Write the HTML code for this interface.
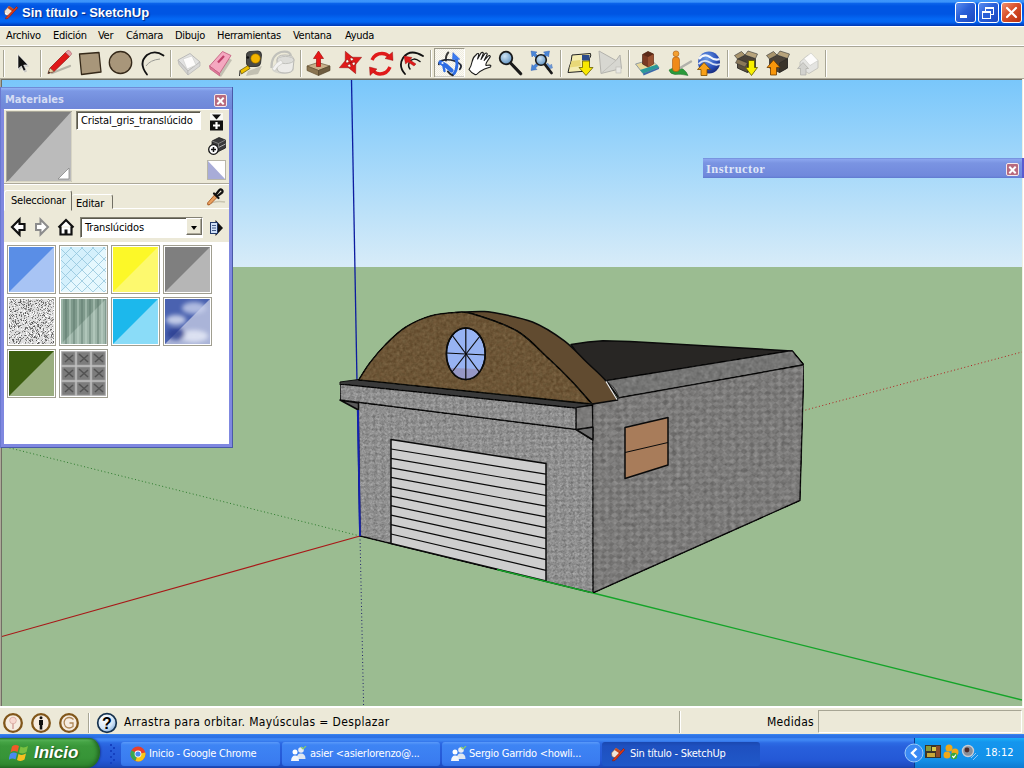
<!DOCTYPE html>
<html lang="es">
<head>
<meta charset="utf-8">
<title>Sin título - SketchUp</title>
<style>
*{box-sizing:border-box;margin:0;padding:0}
html,body{width:1024px;height:768px;overflow:hidden;background:#ece9d8}
body{position:relative;font-family:"DejaVu Sans Condensed","DejaVu Sans","Liberation Sans",sans-serif;font-size:11px;color:#000}
.abs{position:absolute}
/* title bar */
#title{left:0;top:0;width:1024px;height:26px;background:linear-gradient(#3d95fb 0,#3a92fa 2px,#0b63ea 3.5px,#0055e3 6px,#0055e3 14px,#0468f4 19px,#0365f2 22px,#0048cc 24.5px,#0038b0 26px)}
#title .cap{left:22px;top:5px;font-family:"Liberation Sans",sans-serif;font-weight:bold;font-size:13px;color:#fff;letter-spacing:0;text-shadow:1px 1px 1px #0a2a80;white-space:nowrap}
.tb{top:2px;width:21px;height:21px;border:1px solid #fff;border-radius:3px;background:linear-gradient(135deg,#5a8df0 0,#2a5fd8 45%,#1c48c0 100%)}
#tbx{background:linear-gradient(135deg,#f09070 0,#d8502a 45%,#b83010 100%)}
/* menu */
#menu{left:0;top:26px;width:1024px;height:19px;background:#ece9d8;border-top:1px solid #fff}
#menu span{position:absolute;top:2px;white-space:nowrap;letter-spacing:-.3px}
#tool{left:0;top:45px;width:1024px;height:35px;background:#ece9d8;border-top:1px solid #fff;box-shadow:inset 0 1px 0 #a8a596}
/* viewport */
#vp{left:0;top:80px;width:1022px;height:626px;overflow:hidden}
/* status */
#status{left:0;top:706px;width:1024px;height:28px;background:#ece9d8;border-top:2px solid #fff}
/* taskbar */
#frameb{left:0;top:734px;width:1024px;height:4px;background:linear-gradient(#3c8af4 0,#2e74e6 1.5px,#2c70e4 4px)}
#task{left:0;top:738px;width:1024px;height:30px;background:linear-gradient(#3a80f0 0,#4088f4 2px,#2c6ae4 5px,#2860dc 9px,#2458d6 22px,#1e4cc0 28px,#1a42a8 30px)}
#start{left:0;top:0;width:100px;height:30px;border-radius:0 11px 13px 0/0 14px 16px 0;background:linear-gradient(#2e7a2e 0,#58b458 2px,#45a445 4px,#3a983a 8px,#379437 20px,#2f862f 27px,#256e25 30px);box-shadow:inset -3px 0 4px -1px #1e5e1e,1px 0 2px #1a3a9a;color:#fff;font:italic bold 17px "Liberation Sans",sans-serif;text-shadow:1px 1px 2px #1a4a1a}
#tray{left:914px;top:0;width:110px;height:30px;background:linear-gradient(#1ab0f8 0,#1496ee 4px,#1290e8 22px,#0e7ad0 30px);border-left:1px solid #0a3a90;color:#fff}
.tbtn{top:4px;height:24px;border-radius:3px;background:linear-gradient(#5a9afa 0,#3e84f4 3px,#3a7cf0 20px,#3272e6 24px);color:#fff;white-space:nowrap;overflow:hidden}
.tbtn.act{background:linear-gradient(#1a48b0 0,#1e50c0 4px,#2058c8 24px)}
.tbtn span{position:absolute;left:30px;top:5px;letter-spacing:-.25px}
#mat{z-index:3;left:0;top:87px;width:233px;height:361px;background:#7f88e0;border-left:1px solid #6a78d0;box-shadow:inset -1px -1px 0 #4a5aa8}
.ptitle{left:0;top:0;width:231px;height:22px;background:linear-gradient(#5f78c8 0,#8fb0f4 1.5px,#7c98e4 4px,#738edc 13px,#6f86d8 22px);color:#d4dcf4;font:bold 11px "DejaVu Sans Condensed","Liberation Sans",sans-serif}
.pclose{width:13px;height:13px;background:#b86a7e;border:1px solid #f4e8ec;border-radius:2px}
.pclose:before,.pclose:after{content:"";position:absolute;left:1px;top:4.500px;width:9px;height:2px;background:#fff;transform:rotate(45deg)}
.pclose:after{transform:rotate(-45deg)}
.pbody{left:3px;top:22px;width:225px;height:334px;background:#ece9d8;border-top:1px solid #fff}
.field{background:#fff;border:1px solid;border-color:#848274 #fff #fff #848274;box-shadow:inset 1px 1px 0 #5a584c;white-space:nowrap}
.tab{border:1px solid;border-color:#fff #716f64 transparent #fff;border-radius:3px 3px 0 0;background:#ece9d8;white-space:nowrap}
#ins{z-index:3;left:703px;top:158px;width:321px;height:20px;background:linear-gradient(#6f8cd8 0,#8aa4ee 1.5px,#7a94e2 5px,#7088dc 18px,#5f7ad0 20px);border-right:2px solid #5a5ad0;color:#dfe6f8;font:bold 12.5px "Liberation Serif",serif;letter-spacing:.45px}
</style>
</head>
<body>
<div id="title" class="abs">
  <svg class="abs" style="left:3px;top:4px" width="16" height="16" viewBox="0 0 16 16">
    <path d="M1.500,7 L6,2 L11,5.500 L6.500,12.500 L2,10.500 Z" fill="#f0e4d8" stroke="#8a5a3a" stroke-width=".6"/>
    <path d="M6,2 L11,5.500 L9.500,7.500 L4.500,4 Z" fill="#c8461e"/>
    <path d="M3,13.500 L13.500,2.500 L14.800,3.800 L5,14.500 L2.500,15 Z" fill="#e03818" stroke="#7a1a08" stroke-width=".5"/>
    <path d="M2,8.500 L4,9.500 L4,11 L2,10 Z" fill="#fff"/>
  </svg>
  <div class="cap abs">Sin título - SketchUp</div>
  <div class="tb abs" style="left:955px"><i class="abs" style="left:4px;top:12px;width:7px;height:3px;background:#fff"></i></div>
  <div class="tb abs" style="left:978px"><i class="abs" style="left:6px;top:4px;width:9px;height:8px;border:1px solid #fff;border-top-width:2px"></i><i class="abs" style="left:3px;top:8px;width:9px;height:8px;border:1px solid #fff;border-top-width:2px;background:#2a5fd8"></i></div>
  <div class="tb abs" id="tbx" style="left:1001px"><svg class="abs" style="left:0;top:0" width="19" height="19"><path d="M5,5 L14,14 M14,5 L5,14" stroke="#fff" stroke-width="2.200" stroke-linecap="round"/></svg></div>
</div>
<div id="menu" class="abs">
  <span style="left:6px">Archivo</span><span style="left:53px">Edición</span><span style="left:98px">Ver</span><span style="left:126px">Cámara</span><span style="left:175px">Dibujo</span><span style="left:217px">Herramientas</span><span style="left:293px">Ventana</span><span style="left:345px">Ayuda</span>
</div>
<div id="tool" class="abs"></div>
<!--TOOLBAR-->
<svg class="abs" style="left:0;top:47px" width="1024" height="32" viewBox="0 47 1024 32">
  <defs>
    <filter id="bl"><feGaussianBlur stdDeviation="2.2"/></filter>
    <pattern id="hatch" width="2" height="2" patternUnits="userSpaceOnUse"><rect width="2" height="2" fill="#fbfaf5"/><rect width="1" height="1" fill="#efecdf"/><rect x="1" y="1" width="1" height="1" fill="#efecdf"/></pattern>
    <radialGradient id="glass" cx=".4" cy=".35" r=".7"><stop offset="0" stop-color="#cfe4f4"/><stop offset="1" stop-color="#5b8fc0"/></radialGradient>
    <radialGradient id="earth" cx=".4" cy=".3" r=".8"><stop offset="0" stop-color="#6f9fe8"/><stop offset=".6" stop-color="#2a4fb8"/><stop offset="1" stop-color="#12206a"/></radialGradient>
  </defs>
  <!-- separators -->
  <g stroke="#a7a594" stroke-width="1">
    <path d="M3.5,50V77 M40.5,50V77 M170.5,50V77 M300.5,50V77 M430.5,50V77 M560.5,50V77 M628.5,50V77 M727.5,50V77 M825.5,50V77"/>
  </g>
  <g stroke="#fff" stroke-width="1"><path d="M4.5,50V77 M41.5,50V77 M171.5,50V77 M301.5,50V77 M431.5,50V77 M561.5,50V77 M629.5,50V77 M728.5,50V77 M826.5,50V77"/></g>
  <!-- select arrow -->
  <path d="M19,56 L19,70.5 L22.3,67.6 L24.6,72.6 L27,71.5 L24.7,66.6 L29,66.4 Z" fill="#bbb" opacity=".8"/>
  <path d="M18,54.5 L18,69 L21.3,66.1 L23.6,71.1 L26,70 L23.7,65.1 L28,64.9 Z" fill="#111" stroke="#fff" stroke-width=".6"/>
  <!-- pencil -->
  <path d="M52,73 L70,66" stroke="#b5b3a6" stroke-width="2.2" stroke-linecap="round"/>
  <path d="M48,73.5 L50,68 L65.5,52.5 L69.5,56.5 L54,71.5 Z" fill="#e01818" stroke="#8a0e0e" stroke-width=".7"/>
  <path d="M65.5,52.5 L67.3,50.8 Q68.5,50 69.6,51 L71,52.4 Q72,53.6 71.2,54.6 L69.5,56.5 Z" fill="#e8a0a8" stroke="#9a5058" stroke-width=".6"/>
  <path d="M48,73.5 L50,68 L54,71.5 Z" fill="#e8d2a8" stroke="#6a5a3a" stroke-width=".5"/>
  <path d="M48,73.5 L48.8,71.2 L50.4,72.7 Z" fill="#222"/>
  <!-- rectangle -->
  <path d="M79.5,54 L99,52.5 L101,72 L81.5,74.5 Z" fill="#a8967a" stroke="#35291a" stroke-width="1.3" stroke-linejoin="round"/>
  <!-- circle -->
  <ellipse cx="120.5" cy="62.5" rx="11.2" ry="11" fill="#a8967a" stroke="#35291a" stroke-width="1.3"/>
  <!-- arc -->
  <path d="M146,66 Q150,60 160,59" stroke="#9a9a94" stroke-width="1" fill="none"/>
  <path d="M163.5,55.5 Q155,49.500 147,55 Q138,63 147,74.500" stroke="#111" stroke-width="1.8" fill="none" stroke-linecap="round"/>
  <!-- make component -->
  <g opacity=".9">
    <path d="M178,60 L190,53.5 L200,62 L188,71 Z" fill="#e2e2e2" stroke="#b4b4b4" stroke-width="1"/>
    <path d="M178,60 L188,71 L188,75 L179,64.500 Z" fill="#cfcfcf" stroke="#b4b4b4" stroke-width=".8"/>
    <path d="M188,71 L200,62 L200,66 L188,75 Z" fill="#d8d8d8" stroke="#b4b4b4" stroke-width=".8"/>
    <path d="M183,59 L192,56 L196,65 L187,69 Z" fill="#fff" stroke="#c8c8c8" stroke-width=".6"/>
  </g>
  <!-- eraser -->
  <path d="M214,72 L221,77 L232,60 L228,58 Z" fill="#b0aea2" opacity=".7"/>
  <path d="M209.500,66 L222.500,51.500 L231,55.500 L219.500,73.500 Z" fill="#f4a8c0" stroke="#c0587a" stroke-width=".8"/>
  <path d="M209.500,66 L219.500,73.500 L219.800,76 L210,69 Z" fill="#e07898" stroke="#c0587a" stroke-width=".6"/>
  <path d="M218,62.500 L224,56" stroke="#c0406a" stroke-width="2.2"/>
  <!-- tape measure -->
  <path d="M248,71 L262,66 L258,74 L246,76 Z" fill="#b0aea2" opacity=".7"/>
  <path d="M246.500,56 Q246,52 250,51.500 L258,51 Q261.500,51 261.500,55 L260.500,63.500 Q260,66.500 256,66.500 L249,66.500 Q246.500,66 246.500,63 Z" fill="#4a4a48" stroke="#222" stroke-width=".8"/>
  <circle cx="255.500" cy="58.500" r="4.800" fill="#f4b400" stroke="#7a5a00" stroke-width=".6"/>
  <path d="M248,65.500 L240,70.500 L241.500,74 L250,68.500 Z" fill="#f0c000" stroke="#5a4a00" stroke-width=".7"/>
  <path d="M240,70.500 L239.500,76" stroke="#333" stroke-width="1"/>
  <circle cx="247.800" cy="57.500" r="1.300" fill="#111"/>
  <!-- paint bucket (grey) -->
  <g opacity=".9">
    <ellipse cx="283" cy="69" rx="11" ry="5" fill="#d4d3cc"/>
    <path d="M277,60 Q277,55 285,55 Q294,55 294,60 L293,69 Q292,73 285,73 Q278,73 277,69 Z" fill="#ececea" stroke="#b2b2ae" stroke-width="1"/>
    <ellipse cx="285.500" cy="60" rx="8.500" ry="3.600" fill="#dcdcda" stroke="#b2b2ae" stroke-width=".8"/>
    <path d="M271.500,68 Q271,55 281,52 Q290,50.500 291,56" fill="none" stroke="#bdbdb8" stroke-width="2.200"/>
    <path d="M272,69 Q276,62 281,60 L283,63 Q277,66 275,71 Z" fill="#f4f4f4" stroke="#c2c2be" stroke-width=".6"/>
  </g>
  <!-- push/pull -->
  <path d="M307,66 L318,62.500 L330,66 L318.500,70.500 Z" fill="#c8b08a" stroke="#6a583a" stroke-width=".7"/>
  <path d="M307,66 L318.500,70.500 L318.500,75.500 L307,70.500 Z" fill="#8a7450" stroke="#5a482a" stroke-width=".6"/>
  <path d="M318.500,70.500 L330,66 L330,70.500 L318.500,75.500 Z" fill="#6e5c40" stroke="#4a3a20" stroke-width=".6"/>
  <path d="M318.500,51 L323.500,58.500 L320.500,58.500 L320.500,66.500 L316.500,66.500 L316.500,58.500 L313.500,58.500 Z" fill="#e81818" stroke="#900" stroke-width=".6"/>
  <!-- move -->
  <g fill="#e01a1a" stroke="#8a0a0a" stroke-width=".4"><path transform="rotate(-25 350.5 62.5)" d="M350.500,61.300 L354.500,61.300 L354,58.300 L362.800,62.500 L354,66.700 L354.500,63.700 L350.500,63.700 Z"/><path transform="rotate(65 350.5 62.5)" d="M350.500,61.300 L354.500,61.300 L354,58.300 L362.800,62.500 L354,66.700 L354.500,63.700 L350.500,63.700 Z"/><path transform="rotate(155 350.5 62.5)" d="M350.500,61.300 L354.500,61.300 L354,58.300 L362.800,62.500 L354,66.700 L354.500,63.700 L350.500,63.700 Z"/><path transform="rotate(245 350.5 62.5)" d="M350.500,61.300 L354.500,61.300 L354,58.300 L362.800,62.500 L354,66.700 L354.500,63.700 L350.500,63.700 Z"/></g>
  <circle cx="353.5" cy="63.6" r=".8" fill="#fff"/><circle cx="349.4" cy="65.5" r=".8" fill="#fff"/><circle cx="347.5" cy="61.4" r=".8" fill="#fff"/><circle cx="351.6" cy="59.5" r=".8" fill="#fff"/>
  <!-- rotate -->
  <g fill="none" stroke="#e01a1a" stroke-width="3.400">
    <path d="M372,60 Q375,53.500 382,53.500 Q386,53.500 388.500,56"/>
    <path d="M390,67 Q387,74 380,74 Q376,74 373.500,71"/>
  </g>
  <path d="M385,58.500 L393,60.500 L392.500,52 Z" fill="#e01a1a" stroke="#8a0a0a" stroke-width=".4"/>
  <path d="M377,69 L369.500,67 L370,75.500 Z" fill="#e01a1a" stroke="#8a0a0a" stroke-width=".4"/>
  <!-- offset -->
  <g fill="none" stroke="#111" stroke-linecap="round">
    <path d="M423,56 Q410,48 403,58 Q398,66 405,74" stroke-width="1.800"/>
    <path d="M420,61.500 Q413,56.500 409.500,62 Q407.500,66 410,69" stroke-width="1.500"/>
  </g>
  <path d="M404,56 L412,57.500 L410,60 L416,64 L414,66 L408,62 L405.500,64 Z" fill="#e01a1a" stroke="#8a0a0a" stroke-width=".4"/>
  <!-- orbit (active) -->
  <rect x="434.500" y="48.500" width="30" height="28" fill="url(#hatch)" stroke="#9c9a8a" stroke-width="1"/>
  <path d="M435,77 H464.500 V48.500" fill="none" stroke="#fff" stroke-width="1"/>
  <g fill="none" stroke-linecap="round">
    <path d="M448.300,52.500 Q445.500,55.500 446,60.500" stroke="#3a3a38" stroke-width="1.900"/>
    <path d="M438.800,64.500 Q438.500,60.500 445,59.800 Q455,59.200 460.500,64.500 Q462,66.500 459.800,69.300" stroke="#1e2430" stroke-width="1.700"/>
    <path d="M440.500,62.500 Q446,65 451.500,70.500" stroke="#2e6ee4" stroke-width="4.200"/>
    <path d="M443.500,66.500 L444.500,71" stroke="#2e6ee4" stroke-width="2.400"/>
    <path d="M456,58 Q458,64 456,70 Q455,73 453,74.500" stroke="#2e6ee4" stroke-width="2.800"/>
    <path d="M447.800,71.500 Q450,74.500 452.800,75.300" stroke="#22262a" stroke-width="1.900"/>
  </g>
  <path d="M452.900,52.600 L459.800,59.200 L457.500,59.500 L452.500,59.800 Z" fill="#3a7cf2" stroke="#2a5cc8" stroke-width=".5"/>
  <circle cx="442.500" cy="63" r="1.100" fill="#e8f0fc"/>
  <!-- pan hand -->
  <path d="M469,69.500 Q471.300,66 472,62 Q473,57.200 475.500,55.500 L477.200,53.700 Q479.200,52.800 478.600,55.300 L477.600,59 L481,53 Q482.600,51.700 483.400,53.200 L481,59.500 L485,53.500 Q486.600,52.300 487.300,53.900 L484.200,60.500 L488.300,55.900 Q489.900,55 490.300,56.600 L486.500,62.500 Q485.500,64.500 486,65.500 L489.500,65 Q491.600,65.300 490.500,66.900 L484.500,69 Q479,71.500 476.500,74.500 L475,74.600 Q471,72.500 469,69.500 Z" fill="#fff" stroke="#1a1a1a" stroke-width="1.100" stroke-linejoin="round"/>
  <!-- zoom -->
  <path d="M512,64.500 L520.500,73.500" stroke="#9a988c" stroke-width="3" opacity=".6" transform="translate(1.500,1.500)"/>
  <path d="M511,63.500 L520.500,73.500" stroke="#1a1a1a" stroke-width="3.200" stroke-linecap="round"/>
  <circle cx="506" cy="58" r="6.300" fill="url(#glass)" stroke="#1a1a1a" stroke-width="1.800"/>
  <!-- zoom extents -->
  <g fill="#4a86d8" stroke="#2a56a8" stroke-width=".4">
    <path d="M531,51 L537,52 L535.500,53.500 L538,56 L536,58 L533.500,55.500 L532,57 Z"/>
    <path d="M549.500,51 L548.500,57 L547,55.500 L544.500,58 L542.500,56 L545,53.500 L543.500,52 Z"/>
    <path d="M531,70.500 L532,64.500 L533.500,66 L536,63.500 L538,65.500 L535.500,68 L537,69.500 Z"/>
    <path d="M552.500,68 L547,69.500 L548,67.500 L545.500,65 L547.500,63 L550,65.500 L551.500,64 Z" opacity=".8"/>
  </g>
  <path d="M545,64.500 L551.500,73" stroke="#1a1a1a" stroke-width="2.800" stroke-linecap="round"/>
  <circle cx="541" cy="60" r="5.300" fill="url(#glass)" stroke="#1a1a1a" stroke-width="1.600"/>
  <!-- get location -->
  <path d="M572,55 L590.500,53.500 Q591.500,56 589.500,58.500 L588,71 L568,72.500 Q569,67 571,62 Z" fill="#f4ecb0" stroke="#222" stroke-width="1"/>
  <path d="M571.500,61 L580,60 L581,66 L569.500,67.500 Z" fill="#e8d878"/>
  <rect x="582" y="55" width="7.500" height="5.500" fill="#2a4a8a"/>
  <path d="M582.500,61 L589.500,61 L589.500,67.500 L593,67.500 L586,75.500 L579,67.500 L582.500,67.500 Z" fill="#f8e800" stroke="#6a6000" stroke-width=".8"/>
  <!-- toggle terrain (grey) -->
  <g opacity=".85">
    <path d="M599,51 L616,60.500 L620,55 L621.500,68.500 L601,73.500 Z" fill="#d4d4d0" stroke="#a8a8a4" stroke-width="1"/>
    <path d="M601,73.500 L616,60.500" stroke="#b4b4b0" stroke-width=".8"/>
    <rect x="616" y="67" width="5" height="6" fill="#e8e8e6" stroke="#b0b0ac" stroke-width=".6"/>
  </g>
  <!-- building on photo -->
  <path d="M635.500,64 L651,59.500 L659,67.500 L643,73.500 Z" fill="#e8d89a" stroke="#7a8a9a" stroke-width=".8"/>
  <path d="M640,70 L657,64.500 L659,67.500 L643,73.500 Z" fill="#2a9a9a"/>
  <path d="M643,73.500 L659,67.500 L659,69 L643.500,75.500 Z" fill="#3a6aaa"/>
  <path d="M642.500,54.500 L648,51.500 L653.500,54 L653.500,64 L648,67 L642.500,64 Z" fill="#7a3a22" stroke="#3a1a0a" stroke-width=".6"/>
  <path d="M648,57 L653.500,54 L653.500,64 L648,67 Z" fill="#9a5232"/>
  <path d="M642.500,54.500 L648,51.500 L653.500,54 L648,57 Z" fill="#5a2a18"/>
  <!-- person -->
  <path d="M669,70 Q675,66 683,69 Q687,72 688,75.500 Q680,73.500 675,74.500 Q670,74 669,70 Z" fill="#2a9a3a" stroke="#1a6a2a" stroke-width=".5"/>
  <path d="M680,68 L691,61.500" stroke="#b0b0aa" stroke-width="2.400" stroke-linecap="round"/>
  <rect x="672.500" y="57" width="7" height="14.500" rx="3" fill="#f08a18" stroke="#a8560a" stroke-width=".6"/>
  <circle cx="676" cy="53.800" r="2.900" fill="#f4a030" stroke="#a8560a" stroke-width=".6"/>
  <!-- google earth -->
  <circle cx="709" cy="62.500" r="11" fill="url(#earth)"/>
  <path d="M699,59 Q704,53 710,57 Q715,61 719.500,59" stroke="#fff" stroke-width="2.200" fill="none" opacity=".95"/>
  <path d="M698.500,64 Q704,58.500 710,62.500 Q715,66 720,64" stroke="#e8eef8" stroke-width="1.800" fill="none" opacity=".9"/>
  <path d="M704,62.500 L710.500,69.500 L707,69.500 L707,75.500 L701,75.500 L701,69.500 L697.500,69.500 Z" fill="#f8a018" stroke="#7a4a00" stroke-width=".8"/>
  <!-- share: box + yellow arrow -->
  <g id="cbox">
    <path d="M737.500,59 L745,55 L755.500,58.500 L755.500,68 L747.500,72.500 L737.500,68 Z" fill="#4a4238" stroke="#222" stroke-width=".7"/>
    <path d="M737.500,59 L734.500,55.500 L741.500,51.500 L745,55 Z" fill="#a8946c" stroke="#333" stroke-width=".6"/>
    <path d="M745,55 L748,51 L757.500,54 L755.500,58.500 Z" fill="#b8a47c" stroke="#333" stroke-width=".6"/>
    <path d="M737.500,59 L747.500,63 L747.500,72.500 L737.500,68 Z" fill="#5a5040" stroke="#222" stroke-width=".5"/>
    <path d="M737.500,59 L735.500,63 L745,67 L747.500,63 Z" fill="#8a7858" stroke="#333" stroke-width=".5"/>
  </g>
  <path d="M748.500,60.500 L754.500,60.500 L754.500,67.500 L757.500,67.500 L751.500,75.500 L745.500,67.500 L748.500,67.500 Z" fill="#f8f000" stroke="#5a5600" stroke-width=".8"/>
  <!-- share: box + orange arrow -->
  <g transform="translate(32,0)">
    <path d="M737.500,59 L745,55 L755.500,58.500 L755.500,68 L747.500,72.500 L737.500,68 Z" fill="#4a4238" stroke="#222" stroke-width=".7"/>
    <path d="M737.500,59 L734.500,55.500 L741.500,51.500 L745,55 Z" fill="#a8946c" stroke="#333" stroke-width=".6"/>
    <path d="M745,55 L748,51 L757.500,54 L755.500,58.500 Z" fill="#b8a47c" stroke="#333" stroke-width=".6"/>
    <path d="M747.500,63 L755.500,58.500 L755.500,68 L747.500,72.500 Z" fill="#3a342a" stroke="#222" stroke-width=".5"/>
  </g>
  <path d="M773.500,60 L780,67.500 L776.500,67.500 L776.500,75 L770.500,75 L770.500,67.500 L767,67.500 Z" fill="#f8960a" stroke="#6a3a00" stroke-width=".8"/>
  <!-- grey box -->
  <g opacity=".9">
    <path d="M800,62 L808,55 L818,60.500 L818,68 L809,73.500 L800,68.500 Z" fill="#e4e4e2" stroke="#b8b8b4" stroke-width=".8"/>
    <path d="M804,58.500 L811,53 L818,60.500 L810,65.500 Z" fill="#fff" stroke="#c4c4c0" stroke-width=".6"/>
    <path d="M803,62.500 L808.500,68.500 L806,68.500 L806,75 L800.500,75 L800.500,68.500 L797.500,68.500 Z" fill="#d0d0ce" stroke="#a8a8a4" stroke-width=".7"/>
  </g>
</svg>
<!--/TOOLBAR-->
<div id="vp" class="abs">
<svg width="1022" height="626" viewBox="0 80 1022 626">
  <defs>
    <linearGradient id="sky" x1="0" y1="0" x2="0" y2="1"><stop offset="0" stop-color="#79c7fb"/><stop offset="1" stop-color="#d8ecf8"/></linearGradient>
    <filter id="nz" x="0" y="0" width="1" height="1" color-interpolation-filters="sRGB">
      <feTurbulence type="fractalNoise" baseFrequency="0.22" numOctaves="2" seed="7" result="t"/>
      <feColorMatrix in="t" type="matrix" values=".5 .5 0 0 0  .5 .5 0 0 0  .5 .5 0 0 0  0 0 0 0 1" result="g"/>
      <feComposite in="SourceGraphic" in2="g" operator="arithmetic" k1="0" k2="1" k3=".28" k4="-.14" result="m"/>
      <feComposite in="m" in2="SourceGraphic" operator="in"/>
    </filter>
    <pattern id="dia" width="10" height="10" patternUnits="userSpaceOnUse" patternTransform="rotate(38) skewX(-12)"><rect width="5" height="5" fill="#fff" opacity=".07"/><rect x="5" y="5" width="5" height="5" fill="#fff" opacity=".07"/><rect x="5" width="5" height="5" fill="#000" opacity=".05"/><rect y="5" width="5" height="5" fill="#000" opacity=".05"/></pattern>
    <filter id="nzf" x="0" y="0" width="1" height="1" color-interpolation-filters="sRGB">
      <feTurbulence type="fractalNoise" baseFrequency="0.45" numOctaves="2" seed="5" result="t"/>
      <feColorMatrix in="t" type="matrix" values=".5 .5 0 0 0  .5 .5 0 0 0  .5 .5 0 0 0  0 0 0 0 1" result="g"/>
      <feComposite in="SourceGraphic" in2="g" operator="arithmetic" k1="0" k2="1" k3=".4" k4="-.2" result="m"/>
      <feComposite in="m" in2="SourceGraphic" operator="in"/>
    </filter>
    <filter id="nzb" x="0" y="0" width="1" height="1" color-interpolation-filters="sRGB">
      <feTurbulence type="fractalNoise" baseFrequency="0.3" numOctaves="2" seed="11" result="t"/>
      <feColorMatrix in="t" type="matrix" values=".6 .4 0 0 0  .5 .5 0 0 0  .45 .45 0 0 0  0 0 0 0 1" result="g"/>
      <feComposite in="SourceGraphic" in2="g" operator="arithmetic" k1="0" k2="1" k3=".24" k4="-.12" result="m"/>
      <feComposite in="m" in2="SourceGraphic" operator="in"/>
    </filter>
  </defs>
  <rect x="0" y="80" width="1022" height="188" fill="url(#sky)"/>
  <rect x="0" y="267" width="1022" height="440" fill="#9bbc91"/>
<!--HOUSE-->
  <!-- axes behind -->
  <g fill="none" stroke-width="1">
    <line x1="351.5" y1="80" x2="359.8" y2="536" stroke="#0c1ca0" stroke-width="1.3"/>
    <line x1="360" y1="536" x2="0" y2="637" stroke="#a81818" stroke-width="1.2"/>
    <line x1="802" y1="411" x2="1022" y2="352" stroke="#b01e1e" stroke-dasharray="1 2.5"/>
    <line x1="360" y1="536" x2="0" y2="445.5" stroke="#2a7a2a" stroke-dasharray="1 2.5"/>
    <line x1="360" y1="536" x2="363.6" y2="706" stroke="#20206a" stroke-dasharray="1 2.5"/>
    <line x1="593" y1="593" x2="1022" y2="700" stroke="#14a428" stroke-width="1.3"/>
  </g>
  <!-- house -->
  <g stroke="#0a0a0a" stroke-width="1.5" stroke-linejoin="round">
    <polygon points="571,344.5 588,342 603,340.7 630,341.5 661,343.3 738,347.8 783,350.4 792,351 606,381 585,365" fill="#282624"/>
    <polygon points="606,380.5 790,350.8 792.5,351 804,364.8 620,399.5" fill="#757574" filter="url(#nz)"/>
    <polygon points="592.5,404 620,397.5 804,364.8 800,500.5 593,593" fill="#7a7978" filter="url(#nz)"/>
    <polygon points="358,402 576,429 593,440 593,593 360,536" fill="#8e8e8e" filter="url(#nzf)"/>
    <!-- cornice -->
    <polygon points="340,382 358.5,379.5 592.5,404.5 576,408.5 340,385" fill="#3a3a3a" stroke="#111" stroke-width="1"/>
    <polygon points="340,400 358.5,410 358.5,403" fill="#5a5a5a"/>
    <polygon points="576,429.5 593,427 593,440" fill="#6e6e6e"/>
    <polygon points="340,384 576,408 576,429.5 340,400" fill="#8e8e8e" filter="url(#nzf)"/>
    <polygon points="576,407.5 592.5,405 593,427 576,429.5" fill="#7a7978" filter="url(#nz)"/>
    <g stroke="none" fill="url(#dia)"><polygon points="593,405 804,365 800,500 593,592"/><polygon points="359,411 576,431 593,441 593,592 361,536"/><polygon points="341,385 576,409 576,429 341,400"/></g>
    <!-- arch -->
    <path d="M455.0,312.5 C459.2,312.3 473.7,311.5 480.0,311.5 C486.3,311.5 484.2,310.8 493.0,312.5 C501.8,314.2 520.7,317.3 532.5,322.0 C544.3,326.7 554.9,333.9 564.0,340.6 C573.1,347.4 580.0,355.8 587.0,362.5 C594.0,369.2 600.9,374.8 606.0,381.0 C611.1,387.2 615.7,396.8 617.6,400.0 L592.0,404.0 C588.6,400.2 578.8,388.7 571.5,381.0 C564.2,373.3 557.1,366.3 548.0,358.0 C538.9,349.7 529.5,338.3 517.0,331.0 C504.5,323.7 483.3,317.1 473.0,314.0 C462.7,310.9 458.0,312.8 455.0,312.5 Z" fill="#614b30"/>
    <path d="M358.5,380.0 C360.4,377.1 365.6,368.3 370.0,362.5 C374.4,356.7 379.2,350.8 385.0,345.0 C390.8,339.2 397.5,332.3 405.0,327.5 C412.5,322.7 421.7,318.5 430.0,316.0 C438.3,313.5 447.8,312.8 455.0,312.5 C462.2,312.2 462.7,310.9 473.0,314.0 C483.3,317.1 504.5,323.7 517.0,331.0 C529.5,338.3 538.9,349.7 548.0,358.0 C557.1,366.3 564.2,373.3 571.5,381.0 C578.8,388.7 588.6,400.2 592.0,404.0 Z" fill="#6c5539" filter="url(#nzb)"/>
    <path d="M606,381 C612,384 618,392 619,399" fill="none" stroke="#333" stroke-width="1"/>
    <line x1="606" y1="381.5" x2="617" y2="399.5" stroke="#f0f0f0" stroke-width="1.2"/>
    <!-- round window -->
    <clipPath id="wc"><ellipse cx="465.8" cy="353.8" rx="19.4" ry="25.8"/></clipPath>
    <ellipse cx="465.8" cy="353.8" rx="19.4" ry="25.8" fill="#97b3f3"/>
    <polygon points="440,367.5 492,369.5 492,385 440,385" fill="#9698c6" stroke="none" clip-path="url(#wc)"/>
    <g stroke-width="1.2" clip-path="url(#wc)">
      <line x1="465.8" y1="328" x2="465.8" y2="380"/>
      <line x1="446" y1="353" x2="486" y2="355"/>
      <line x1="452" y1="335" x2="480" y2="373"/>
      <line x1="480" y1="336" x2="452" y2="372"/>
    </g>
    <ellipse cx="465.8" cy="353.8" rx="19.4" ry="25.8" fill="none"/>
    <!-- garage door -->
    <polygon points="391,439.5 546,463.5 546,581 391,543.5" fill="#cecece"/>
    <g stroke-width="1.2">
      <line x1="391" y1="449.0" x2="546" y2="474.2"/>
      <line x1="391" y1="458.4" x2="546" y2="484.9"/>
      <line x1="391" y1="467.9" x2="546" y2="495.5"/>
      <line x1="391" y1="477.3" x2="546" y2="506.2"/>
      <line x1="391" y1="486.8" x2="546" y2="516.9"/>
      <line x1="391" y1="496.2" x2="546" y2="527.6"/>
      <line x1="391" y1="505.7" x2="546" y2="538.3"/>
      <line x1="391" y1="515.1" x2="546" y2="549.0"/>
      <line x1="391" y1="524.6" x2="546" y2="559.6"/>
      <line x1="391" y1="534.0" x2="546" y2="570.3"/>
    </g>
    <!-- side window -->
    <polygon points="625,427.5 668,417.5 668,465 625,478.5" fill="#a87c5a"/>
    <line x1="625" y1="452.5" x2="668" y2="442.5" stroke-width="1"/>
  </g>
  <line x1="497" y1="569.5" x2="593" y2="593" stroke="#14a428" stroke-width="1.4"/>
  <line x1="358" y1="410" x2="360" y2="536" stroke="#1420b0" stroke-width="1.8"/>
<!--/HOUSE-->
</svg>
</div>
<!--PANELS-->
<div id="mat" class="abs">
  <div class="ptitle abs"><span class="abs" style="left:4px;top:6px">Materiales</span><i class="pclose abs" style="left:213px;top:7px"></i></div>
  <div class="pbody abs">
    <svg class="abs" style="left:2px;top:1px" width="66" height="71" viewBox="0 0 66 71"><rect x=".5" y=".5" width="65" height="70" fill="#7f7f7f" stroke="#a8a698"/><polygon points="65,1 65,70 2,70" fill="#bbbbbb"/><path d="M1,70.500 H65.500 V1" fill="none" stroke="#d8d5c4"/><polygon points="63,57 63,68 52,68" fill="#fff" stroke="#888" stroke-width=".8"/></svg>
    <div class="field abs" style="left:72px;top:1px;width:125px;height:19px"><span class="abs" style="left:4px;top:2px;letter-spacing:-.13px">Cristal_gris_translúcido</span></div>
    <svg class="abs" style="left:202.500px;top:.5px" width="22" height="72" viewBox="207 111 22 72">
      <rect x="210" y="113" width="13" height="8" fill="#f8f8f4"/>
      <path d="M212,114.500 L221,114.500 L216.500,119.500 Z" fill="#111"/>
      <rect x="210" y="120.500" width="13" height="10" fill="#111"/>
      <path d="M213,125.500 H220 M216.500,122 V129" stroke="#fff" stroke-width="2.200"/>
      <g stroke="#111" stroke-width=".7"><path d="M212,141 L219,137.500 L225.500,140 L225.500,148 L218.500,151.500 L212,148.500 Z" fill="#3a3a3a"/><path d="M212,141 L218.500,143.500 L225.500,140 M218.500,143.500 V151.500" fill="none" stroke="#999"/><path d="M212,144.500 L218.500,147.500 L225.500,144" fill="none" stroke="#ddd"/></g>
      <circle cx="213.500" cy="149.500" r="4.800" fill="#fff" stroke="#111" stroke-width="1.300"/><path d="M211,149.500 H216 M213.500,147 V152" stroke="#111" stroke-width="1.500"/>
      <rect x="207.500" y="160.500" width="18" height="19" fill="#fff" stroke="#b8b6a8"/><polygon points="208,161 225,179 208,179" fill="#a8acd8"/>
    </svg>
    <div class="abs" style="left:0;top:73px;width:225px;height:2px;border-top:1px solid #aca899;border-bottom:1px solid #fff"></div>
    <div class="abs" style="left:0;top:98px;width:225px;height:3px;border-top:1px solid #fff"></div>
    <div class="tab abs" style="left:0;top:80px;width:68px;height:21px;"><span class="abs" style="left:6px;top:3px;letter-spacing:-.25px">Seleccionar</span></div>
    <div class="tab abs" style="left:68px;top:84px;width:41px;height:15px;border-left:0"><span class="abs" style="left:4px;top:2px;letter-spacing:-.2px">Editar</span></div>
    <svg class="abs" style="left:200px;top:77px" width="24" height="22" viewBox="205 187 24 22">
      <path d="M208,205 Q216,200 226,202" stroke="#c8c4b0" stroke-width="1.400" fill="none"/>
      <path d="M209,205 L208.500,203 L215.500,195 L218,197.500 L211,204.500 Z" fill="#e8a060" stroke="#a04a10" stroke-width=".8"/>
      <path d="M215,193.500 L219.500,198 M216.500,195 L220,190.500 Q221.500,188.500 223,190 Q224.500,191.500 222.500,193 L218,196.500" stroke="#111" stroke-width="2.200" fill="none" stroke-linecap="round"/>
    </svg>
    <svg class="abs" style="left:6px;top:105.500px" width="70" height="22" viewBox="10 215 70 22">
      <path d="M12,226 L19.500,218.500 L19.500,223 L24.500,223 L24.500,229 L19.500,229 L19.500,233.500 Z" fill="#fff" stroke="#111" stroke-width="2.200" stroke-linejoin="miter"/>
      <path d="M48,226 L40.500,218.500 L40.500,223 L36,223 L36,229 L40.500,229 L40.500,233.500 Z" fill="#fff" stroke="#8c8c8c" stroke-width="2"/>
      <path d="M58.500,226.500 L66,219 L73.500,226.500 M60.500,225.500 V233.500 H71.500 V225.500" fill="#fff" stroke="#111" stroke-width="2.200"/>
      <rect x="64.500" y="228.500" width="3" height="5" fill="#111"/>
    </svg>
    <div class="field abs" style="left:76px;top:107px;width:123px;height:21px"><span class="abs" style="left:4px;top:3px;letter-spacing:-.15px">Translúcidos</span>
      <div class="abs" style="left:105px;top:0;width:16px;height:17px;background:#ece9d8;border:1px solid;border-color:#fff #716f64 #716f64 #fff;box-shadow:inset -1px -1px 0 #aca899"><i class="abs" style="left:4px;top:7px;border:3.5px solid transparent;border-top:4px solid #000;border-bottom:0"></i></div></div>
    <svg class="abs" style="left:205px;top:108px" width="16" height="20" viewBox="209 217 16 20">
      <path d="M215.500,219 L223,227 L215.500,235 Z" fill="#111"/>
      <rect x="210.500" y="221.500" width="7" height="11" fill="#cfe0f8" stroke="#223a6a" stroke-width="1"/>
      <path d="M212,224.500 H216 M212,227 H216 M212,229.500 H216" stroke="#223a6a" stroke-width=".8"/>
    </svg>
    <div class="abs" style="left:0;top:132px;width:225px;height:202px;background:#fff"></div>
    <svg class="abs" style="left:0;top:132px" width="225" height="160" viewBox="4 241 225 160">
<rect x="7.5" y="244.5" width="48" height="48" fill="#fff" stroke="#a09e90"/>
<rect x="9" y="246" width="45" height="45" fill="#5a8ee6"/><polygon points="54,246 54,291 9,291" fill="#a8c4f4"/>
<rect x="59.5" y="244.5" width="48" height="48" fill="#fff" stroke="#a09e90"/>
<rect x="61" y="246" width="45" height="45" fill="#d4f0fc"/><polygon points="106,246 106,291 61,291" fill="#e6f8fe"/>
<clipPath id="c1"><rect x="61" y="246" width="45" height="45"/></clipPath><g stroke="#8cc0d8" stroke-width=".8" opacity=".9" clip-path="url(#c1)"><line x1="17" y1="246" x2="-29" y2="292"/><line x1="-29" y1="246" x2="17" y2="292"/><line x1="28" y1="246" x2="-18" y2="292"/><line x1="-18" y1="246" x2="28" y2="292"/><line x1="39" y1="246" x2="-7" y2="292"/><line x1="-7" y1="246" x2="39" y2="292"/><line x1="50" y1="246" x2="4" y2="292"/><line x1="4" y1="246" x2="50" y2="292"/><line x1="61" y1="246" x2="15" y2="292"/><line x1="15" y1="246" x2="61" y2="292"/><line x1="72" y1="246" x2="26" y2="292"/><line x1="26" y1="246" x2="72" y2="292"/><line x1="83" y1="246" x2="37" y2="292"/><line x1="37" y1="246" x2="83" y2="292"/><line x1="94" y1="246" x2="48" y2="292"/><line x1="48" y1="246" x2="94" y2="292"/><line x1="105" y1="246" x2="59" y2="292"/><line x1="59" y1="246" x2="105" y2="292"/><line x1="116" y1="246" x2="70" y2="292"/><line x1="70" y1="246" x2="116" y2="292"/><line x1="127" y1="246" x2="81" y2="292"/><line x1="81" y1="246" x2="127" y2="292"/><line x1="138" y1="246" x2="92" y2="292"/><line x1="92" y1="246" x2="138" y2="292"/><line x1="149" y1="246" x2="103" y2="292"/><line x1="103" y1="246" x2="149" y2="292"/></g>
<rect x="111.5" y="244.5" width="48" height="48" fill="#fff" stroke="#a09e90"/>
<rect x="113" y="246" width="45" height="45" fill="#fcf828"/><polygon points="158,246 158,291 113,291" fill="#fdf96e"/>
<rect x="163.5" y="244.5" width="48" height="48" fill="#fff" stroke="#a09e90"/>
<rect x="165" y="246" width="45" height="45" fill="#7f7f7f"/><polygon points="210,246 210,291 165,291" fill="#b6b6b6"/>
<rect x="7.5" y="296.5" width="48" height="48" fill="#fff" stroke="#a09e90"/>
<rect x="9" y="298" width="45" height="45" fill="#dedede"/>
<rect x="38" y="337" width="1" height="1" fill="#7a7a7a"/><rect x="26" y="306" width="1" height="1" fill="#a0a0a0"/><rect x="52" y="298" width="1" height="1" fill="#7a7a7a"/><rect x="41" y="327" width="1" height="1" fill="#8a8a8a"/><rect x="30" y="333" width="1" height="1" fill="#6a6a6a"/><rect x="33" y="308" width="1" height="1" fill="#fafafa"/><rect x="36" y="308" width="1" height="1" fill="#a0a0a0"/><rect x="24" y="301" width="1" height="1" fill="#8a8a8a"/><rect x="17" y="330" width="1" height="1" fill="#8a8a8a"/><rect x="53" y="322" width="1" height="1" fill="#8a8a8a"/><rect x="27" y="311" width="1" height="1" fill="#5a5a5a"/><rect x="35" y="303" width="1" height="1" fill="#b4b4b4"/><rect x="22" y="323" width="1" height="1" fill="#b4b4b4"/><rect x="30" y="300" width="1" height="1" fill="#5a5a5a"/><rect x="9" y="324" width="1" height="1" fill="#6a6a6a"/><rect x="33" y="329" width="1" height="1" fill="#a0a0a0"/><rect x="10" y="313" width="1" height="1" fill="#9a9a9a"/><rect x="16" y="336" width="1" height="1" fill="#6a6a6a"/><rect x="16" y="335" width="1" height="1" fill="#5a5a5a"/><rect x="21" y="319" width="1" height="1" fill="#6a6a6a"/><rect x="14" y="306" width="1" height="1" fill="#ffffff"/><rect x="10" y="330" width="1" height="1" fill="#8a8a8a"/><rect x="45" y="329" width="1" height="1" fill="#ffffff"/><rect x="21" y="324" width="1" height="1" fill="#8a8a8a"/><rect x="34" y="310" width="1" height="1" fill="#8a8a8a"/><rect x="53" y="335" width="1" height="1" fill="#a0a0a0"/><rect x="20" y="336" width="1" height="1" fill="#6a6a6a"/><rect x="12" y="315" width="1" height="1" fill="#ffffff"/><rect x="52" y="336" width="1" height="1" fill="#a0a0a0"/><rect x="26" y="334" width="1" height="1" fill="#6a6a6a"/><rect x="16" y="323" width="1" height="1" fill="#5a5a5a"/><rect x="19" y="337" width="1" height="1" fill="#ffffff"/><rect x="11" y="321" width="1" height="1" fill="#ffffff"/><rect x="46" y="334" width="1" height="1" fill="#8a8a8a"/><rect x="31" y="305" width="1" height="1" fill="#7a7a7a"/><rect x="37" y="311" width="1" height="1" fill="#9a9a9a"/><rect x="21" y="334" width="1" height="1" fill="#6a6a6a"/><rect x="33" y="336" width="1" height="1" fill="#7a7a7a"/><rect x="9" y="325" width="1" height="1" fill="#8a8a8a"/><rect x="22" y="312" width="1" height="1" fill="#fafafa"/><rect x="26" y="318" width="1" height="1" fill="#8a8a8a"/><rect x="28" y="338" width="1" height="1" fill="#b4b4b4"/><rect x="15" y="331" width="1" height="1" fill="#6a6a6a"/><rect x="10" y="322" width="1" height="1" fill="#ffffff"/><rect x="36" y="329" width="1" height="1" fill="#7a7a7a"/><rect x="24" y="334" width="1" height="1" fill="#8a8a8a"/><rect x="36" y="339" width="1" height="1" fill="#5a5a5a"/><rect x="15" y="323" width="1" height="1" fill="#ffffff"/><rect x="32" y="333" width="1" height="1" fill="#7a7a7a"/><rect x="17" y="340" width="1" height="1" fill="#b4b4b4"/><rect x="19" y="342" width="1" height="1" fill="#b4b4b4"/><rect x="10" y="301" width="1" height="1" fill="#a0a0a0"/><rect x="25" y="308" width="1" height="1" fill="#8a8a8a"/><rect x="47" y="307" width="1" height="1" fill="#6a6a6a"/><rect x="12" y="301" width="1" height="1" fill="#fafafa"/><rect x="22" y="322" width="1" height="1" fill="#b4b4b4"/><rect x="48" y="298" width="1" height="1" fill="#7a7a7a"/><rect x="27" y="307" width="1" height="1" fill="#fafafa"/><rect x="44" y="315" width="1" height="1" fill="#a0a0a0"/><rect x="14" y="333" width="1" height="1" fill="#b4b4b4"/><rect x="53" y="305" width="1" height="1" fill="#8a8a8a"/><rect x="35" y="326" width="1" height="1" fill="#a0a0a0"/><rect x="44" y="322" width="1" height="1" fill="#a0a0a0"/><rect x="51" y="315" width="1" height="1" fill="#fafafa"/><rect x="31" y="304" width="1" height="1" fill="#6a6a6a"/><rect x="26" y="331" width="1" height="1" fill="#a0a0a0"/><rect x="20" y="338" width="1" height="1" fill="#8a8a8a"/><rect x="19" y="312" width="1" height="1" fill="#6a6a6a"/><rect x="21" y="309" width="1" height="1" fill="#fafafa"/><rect x="38" y="335" width="1" height="1" fill="#ffffff"/><rect x="43" y="322" width="1" height="1" fill="#8a8a8a"/><rect x="20" y="333" width="1" height="1" fill="#fafafa"/><rect x="46" y="314" width="1" height="1" fill="#ffffff"/><rect x="13" y="339" width="1" height="1" fill="#6a6a6a"/><rect x="46" y="335" width="1" height="1" fill="#9a9a9a"/><rect x="43" y="317" width="1" height="1" fill="#ffffff"/><rect x="42" y="332" width="1" height="1" fill="#8a8a8a"/><rect x="50" y="334" width="1" height="1" fill="#ffffff"/><rect x="28" y="302" width="1" height="1" fill="#5a5a5a"/><rect x="17" y="304" width="1" height="1" fill="#8a8a8a"/><rect x="53" y="329" width="1" height="1" fill="#fafafa"/><rect x="12" y="329" width="1" height="1" fill="#6a6a6a"/><rect x="52" y="336" width="1" height="1" fill="#6a6a6a"/><rect x="32" y="313" width="1" height="1" fill="#fafafa"/><rect x="23" y="321" width="1" height="1" fill="#fafafa"/><rect x="24" y="300" width="1" height="1" fill="#8a8a8a"/><rect x="48" y="301" width="1" height="1" fill="#9a9a9a"/><rect x="35" y="335" width="1" height="1" fill="#8a8a8a"/><rect x="14" y="310" width="1" height="1" fill="#6a6a6a"/><rect x="47" y="309" width="1" height="1" fill="#8a8a8a"/><rect x="13" y="299" width="1" height="1" fill="#7a7a7a"/><rect x="48" y="328" width="1" height="1" fill="#ffffff"/><rect x="43" y="328" width="1" height="1" fill="#6a6a6a"/><rect x="13" y="319" width="1" height="1" fill="#8a8a8a"/><rect x="29" y="298" width="1" height="1" fill="#fafafa"/><rect x="37" y="335" width="1" height="1" fill="#a0a0a0"/><rect x="33" y="328" width="1" height="1" fill="#a0a0a0"/><rect x="15" y="320" width="1" height="1" fill="#5a5a5a"/><rect x="37" y="306" width="1" height="1" fill="#5a5a5a"/><rect x="23" y="304" width="1" height="1" fill="#8a8a8a"/><rect x="12" y="305" width="1" height="1" fill="#8a8a8a"/><rect x="50" y="303" width="1" height="1" fill="#7a7a7a"/><rect x="15" y="299" width="1" height="1" fill="#fafafa"/><rect x="49" y="331" width="1" height="1" fill="#5a5a5a"/><rect x="32" y="338" width="1" height="1" fill="#8a8a8a"/><rect x="24" y="298" width="1" height="1" fill="#b4b4b4"/><rect x="42" y="341" width="1" height="1" fill="#5a5a5a"/><rect x="9" y="326" width="1" height="1" fill="#b4b4b4"/><rect x="48" y="299" width="1" height="1" fill="#8a8a8a"/><rect x="42" y="324" width="1" height="1" fill="#6a6a6a"/><rect x="25" y="328" width="1" height="1" fill="#7a7a7a"/><rect x="47" y="312" width="1" height="1" fill="#6a6a6a"/><rect x="52" y="315" width="1" height="1" fill="#a0a0a0"/><rect x="28" y="300" width="1" height="1" fill="#a0a0a0"/><rect x="31" y="323" width="1" height="1" fill="#6a6a6a"/><rect x="28" y="304" width="1" height="1" fill="#6a6a6a"/><rect x="29" y="326" width="1" height="1" fill="#5a5a5a"/><rect x="35" y="336" width="1" height="1" fill="#7a7a7a"/><rect x="40" y="334" width="1" height="1" fill="#7a7a7a"/><rect x="34" y="325" width="1" height="1" fill="#5a5a5a"/><rect x="14" y="315" width="1" height="1" fill="#b4b4b4"/><rect x="38" y="327" width="1" height="1" fill="#fafafa"/><rect x="37" y="322" width="1" height="1" fill="#a0a0a0"/><rect x="30" y="323" width="1" height="1" fill="#6a6a6a"/><rect x="29" y="303" width="1" height="1" fill="#a0a0a0"/><rect x="29" y="332" width="1" height="1" fill="#6a6a6a"/><rect x="21" y="311" width="1" height="1" fill="#7a7a7a"/><rect x="51" y="306" width="1" height="1" fill="#8a8a8a"/><rect x="30" y="326" width="1" height="1" fill="#9a9a9a"/><rect x="22" y="342" width="1" height="1" fill="#ffffff"/><rect x="30" y="302" width="1" height="1" fill="#6a6a6a"/><rect x="51" y="333" width="1" height="1" fill="#9a9a9a"/><rect x="39" y="312" width="1" height="1" fill="#7a7a7a"/><rect x="41" y="330" width="1" height="1" fill="#8a8a8a"/><rect x="38" y="298" width="1" height="1" fill="#b4b4b4"/><rect x="43" y="311" width="1" height="1" fill="#8a8a8a"/><rect x="23" y="298" width="1" height="1" fill="#7a7a7a"/><rect x="11" y="303" width="1" height="1" fill="#a0a0a0"/><rect x="30" y="308" width="1" height="1" fill="#8a8a8a"/><rect x="41" y="323" width="1" height="1" fill="#9a9a9a"/><rect x="33" y="335" width="1" height="1" fill="#ffffff"/><rect x="17" y="330" width="1" height="1" fill="#7a7a7a"/><rect x="31" y="315" width="1" height="1" fill="#5a5a5a"/><rect x="29" y="322" width="1" height="1" fill="#a0a0a0"/><rect x="48" y="309" width="1" height="1" fill="#a0a0a0"/><rect x="9" y="317" width="1" height="1" fill="#6a6a6a"/><rect x="26" y="328" width="1" height="1" fill="#ffffff"/><rect x="52" y="325" width="1" height="1" fill="#8a8a8a"/><rect x="26" y="316" width="1" height="1" fill="#a0a0a0"/><rect x="42" y="326" width="1" height="1" fill="#fafafa"/><rect x="52" y="312" width="1" height="1" fill="#a0a0a0"/><rect x="30" y="307" width="1" height="1" fill="#7a7a7a"/><rect x="47" y="301" width="1" height="1" fill="#ffffff"/><rect x="26" y="320" width="1" height="1" fill="#6a6a6a"/><rect x="46" y="309" width="1" height="1" fill="#ffffff"/><rect x="51" y="304" width="1" height="1" fill="#fafafa"/><rect x="17" y="319" width="1" height="1" fill="#5a5a5a"/><rect x="43" y="306" width="1" height="1" fill="#9a9a9a"/><rect x="22" y="330" width="1" height="1" fill="#5a5a5a"/><rect x="52" y="334" width="1" height="1" fill="#9a9a9a"/><rect x="9" y="333" width="1" height="1" fill="#6a6a6a"/><rect x="31" y="329" width="1" height="1" fill="#7a7a7a"/><rect x="12" y="321" width="1" height="1" fill="#9a9a9a"/><rect x="38" y="325" width="1" height="1" fill="#5a5a5a"/><rect x="44" y="304" width="1" height="1" fill="#a0a0a0"/><rect x="46" y="303" width="1" height="1" fill="#7a7a7a"/><rect x="25" y="313" width="1" height="1" fill="#fafafa"/><rect x="42" y="309" width="1" height="1" fill="#ffffff"/><rect x="9" y="340" width="1" height="1" fill="#ffffff"/><rect x="30" y="340" width="1" height="1" fill="#5a5a5a"/><rect x="20" y="299" width="1" height="1" fill="#6a6a6a"/><rect x="46" y="335" width="1" height="1" fill="#5a5a5a"/><rect x="51" y="319" width="1" height="1" fill="#b4b4b4"/><rect x="17" y="319" width="1" height="1" fill="#b4b4b4"/><rect x="34" y="300" width="1" height="1" fill="#8a8a8a"/><rect x="34" y="313" width="1" height="1" fill="#fafafa"/><rect x="38" y="342" width="1" height="1" fill="#6a6a6a"/><rect x="29" y="309" width="1" height="1" fill="#a0a0a0"/><rect x="45" y="310" width="1" height="1" fill="#ffffff"/><rect x="46" y="322" width="1" height="1" fill="#ffffff"/><rect x="18" y="322" width="1" height="1" fill="#6a6a6a"/><rect x="34" y="306" width="1" height="1" fill="#b4b4b4"/><rect x="35" y="328" width="1" height="1" fill="#a0a0a0"/><rect x="51" y="338" width="1" height="1" fill="#8a8a8a"/><rect x="41" y="329" width="1" height="1" fill="#ffffff"/><rect x="25" y="314" width="1" height="1" fill="#7a7a7a"/><rect x="48" y="320" width="1" height="1" fill="#ffffff"/><rect x="9" y="310" width="1" height="1" fill="#6a6a6a"/><rect x="50" y="331" width="1" height="1" fill="#fafafa"/><rect x="28" y="304" width="1" height="1" fill="#5a5a5a"/><rect x="9" y="310" width="1" height="1" fill="#fafafa"/><rect x="16" y="314" width="1" height="1" fill="#b4b4b4"/><rect x="27" y="312" width="1" height="1" fill="#6a6a6a"/><rect x="20" y="340" width="1" height="1" fill="#9a9a9a"/><rect x="26" y="321" width="1" height="1" fill="#7a7a7a"/><rect x="29" y="333" width="1" height="1" fill="#a0a0a0"/><rect x="44" y="341" width="1" height="1" fill="#6a6a6a"/><rect x="17" y="311" width="1" height="1" fill="#8a8a8a"/><rect x="12" y="311" width="1" height="1" fill="#6a6a6a"/><rect x="25" y="326" width="1" height="1" fill="#7a7a7a"/><rect x="31" y="333" width="1" height="1" fill="#8a8a8a"/><rect x="15" y="324" width="1" height="1" fill="#9a9a9a"/><rect x="20" y="301" width="1" height="1" fill="#5a5a5a"/><rect x="45" y="307" width="1" height="1" fill="#ffffff"/><rect x="45" y="324" width="1" height="1" fill="#7a7a7a"/><rect x="53" y="340" width="1" height="1" fill="#5a5a5a"/><rect x="49" y="320" width="1" height="1" fill="#ffffff"/><rect x="42" y="324" width="1" height="1" fill="#6a6a6a"/><rect x="19" y="332" width="1" height="1" fill="#7a7a7a"/><rect x="26" y="327" width="1" height="1" fill="#b4b4b4"/><rect x="27" y="325" width="1" height="1" fill="#ffffff"/><rect x="36" y="304" width="1" height="1" fill="#6a6a6a"/><rect x="31" y="341" width="1" height="1" fill="#5a5a5a"/><rect x="35" y="314" width="1" height="1" fill="#7a7a7a"/><rect x="37" y="321" width="1" height="1" fill="#8a8a8a"/><rect x="35" y="330" width="1" height="1" fill="#a0a0a0"/><rect x="13" y="339" width="1" height="1" fill="#8a8a8a"/><rect x="50" y="318" width="1" height="1" fill="#9a9a9a"/><rect x="40" y="299" width="1" height="1" fill="#b4b4b4"/><rect x="36" y="303" width="1" height="1" fill="#9a9a9a"/><rect x="25" y="310" width="1" height="1" fill="#fafafa"/><rect x="19" y="336" width="1" height="1" fill="#6a6a6a"/><rect x="24" y="316" width="1" height="1" fill="#6a6a6a"/><rect x="42" y="305" width="1" height="1" fill="#6a6a6a"/><rect x="21" y="326" width="1" height="1" fill="#8a8a8a"/><rect x="33" y="330" width="1" height="1" fill="#b4b4b4"/><rect x="53" y="309" width="1" height="1" fill="#8a8a8a"/><rect x="42" y="331" width="1" height="1" fill="#b4b4b4"/><rect x="18" y="324" width="1" height="1" fill="#a0a0a0"/><rect x="21" y="317" width="1" height="1" fill="#fafafa"/><rect x="27" y="339" width="1" height="1" fill="#fafafa"/><rect x="41" y="339" width="1" height="1" fill="#7a7a7a"/><rect x="52" y="330" width="1" height="1" fill="#fafafa"/><rect x="12" y="335" width="1" height="1" fill="#ffffff"/><rect x="49" y="328" width="1" height="1" fill="#8a8a8a"/><rect x="14" y="324" width="1" height="1" fill="#7a7a7a"/><rect x="13" y="328" width="1" height="1" fill="#a0a0a0"/><rect x="46" y="332" width="1" height="1" fill="#a0a0a0"/><rect x="50" y="329" width="1" height="1" fill="#9a9a9a"/><rect x="43" y="329" width="1" height="1" fill="#8a8a8a"/><rect x="45" y="330" width="1" height="1" fill="#6a6a6a"/><rect x="27" y="326" width="1" height="1" fill="#8a8a8a"/><rect x="45" y="342" width="1" height="1" fill="#b4b4b4"/><rect x="44" y="308" width="1" height="1" fill="#b4b4b4"/><rect x="9" y="319" width="1" height="1" fill="#ffffff"/><rect x="37" y="331" width="1" height="1" fill="#7a7a7a"/><rect x="29" y="309" width="1" height="1" fill="#a0a0a0"/><rect x="53" y="318" width="1" height="1" fill="#7a7a7a"/><rect x="30" y="328" width="1" height="1" fill="#8a8a8a"/><rect x="29" y="342" width="1" height="1" fill="#b4b4b4"/><rect x="15" y="334" width="1" height="1" fill="#b4b4b4"/><rect x="28" y="301" width="1" height="1" fill="#9a9a9a"/><rect x="39" y="302" width="1" height="1" fill="#b4b4b4"/><rect x="35" y="312" width="1" height="1" fill="#fafafa"/><rect x="27" y="322" width="1" height="1" fill="#fafafa"/><rect x="41" y="300" width="1" height="1" fill="#5a5a5a"/><rect x="19" y="341" width="1" height="1" fill="#8a8a8a"/><rect x="45" y="302" width="1" height="1" fill="#8a8a8a"/><rect x="14" y="340" width="1" height="1" fill="#b4b4b4"/><rect x="9" y="328" width="1" height="1" fill="#b4b4b4"/><rect x="12" y="326" width="1" height="1" fill="#a0a0a0"/><rect x="19" y="303" width="1" height="1" fill="#b4b4b4"/><rect x="15" y="305" width="1" height="1" fill="#a0a0a0"/><rect x="25" y="338" width="1" height="1" fill="#7a7a7a"/><rect x="25" y="312" width="1" height="1" fill="#5a5a5a"/><rect x="53" y="341" width="1" height="1" fill="#5a5a5a"/><rect x="40" y="334" width="1" height="1" fill="#ffffff"/><rect x="21" y="324" width="1" height="1" fill="#b4b4b4"/><rect x="38" y="313" width="1" height="1" fill="#9a9a9a"/><rect x="53" y="303" width="1" height="1" fill="#b4b4b4"/><rect x="26" y="307" width="1" height="1" fill="#a0a0a0"/><rect x="10" y="336" width="1" height="1" fill="#9a9a9a"/><rect x="17" y="327" width="1" height="1" fill="#fafafa"/><rect x="16" y="336" width="1" height="1" fill="#8a8a8a"/><rect x="48" y="322" width="1" height="1" fill="#9a9a9a"/><rect x="43" y="319" width="1" height="1" fill="#a0a0a0"/><rect x="23" y="319" width="1" height="1" fill="#5a5a5a"/><rect x="31" y="332" width="1" height="1" fill="#8a8a8a"/><rect x="15" y="303" width="1" height="1" fill="#6a6a6a"/><rect x="32" y="334" width="1" height="1" fill="#fafafa"/><rect x="32" y="339" width="1" height="1" fill="#5a5a5a"/><rect x="52" y="326" width="1" height="1" fill="#ffffff"/><rect x="50" y="298" width="1" height="1" fill="#fafafa"/><rect x="25" y="341" width="1" height="1" fill="#7a7a7a"/><rect x="19" y="321" width="1" height="1" fill="#8a8a8a"/><rect x="27" y="311" width="1" height="1" fill="#b4b4b4"/><rect x="48" y="308" width="1" height="1" fill="#9a9a9a"/><rect x="16" y="299" width="1" height="1" fill="#5a5a5a"/><rect x="45" y="307" width="1" height="1" fill="#6a6a6a"/><rect x="52" y="342" width="1" height="1" fill="#a0a0a0"/><rect x="48" y="302" width="1" height="1" fill="#9a9a9a"/><rect x="17" y="324" width="1" height="1" fill="#b4b4b4"/><rect x="46" y="339" width="1" height="1" fill="#fafafa"/><rect x="13" y="324" width="1" height="1" fill="#a0a0a0"/><rect x="26" y="304" width="1" height="1" fill="#ffffff"/><rect x="18" y="307" width="1" height="1" fill="#fafafa"/><rect x="42" y="314" width="1" height="1" fill="#6a6a6a"/><rect x="32" y="304" width="1" height="1" fill="#b4b4b4"/><rect x="50" y="305" width="1" height="1" fill="#6a6a6a"/><rect x="23" y="328" width="1" height="1" fill="#ffffff"/><rect x="19" y="331" width="1" height="1" fill="#7a7a7a"/><rect x="26" y="310" width="1" height="1" fill="#a0a0a0"/><rect x="52" y="319" width="1" height="1" fill="#6a6a6a"/><rect x="24" y="303" width="1" height="1" fill="#5a5a5a"/><rect x="9" y="323" width="1" height="1" fill="#6a6a6a"/><rect x="39" y="299" width="1" height="1" fill="#6a6a6a"/><rect x="21" y="317" width="1" height="1" fill="#b4b4b4"/><rect x="43" y="302" width="1" height="1" fill="#9a9a9a"/><rect x="44" y="311" width="1" height="1" fill="#ffffff"/><rect x="22" y="303" width="1" height="1" fill="#8a8a8a"/><rect x="14" y="311" width="1" height="1" fill="#7a7a7a"/><rect x="11" y="327" width="1" height="1" fill="#a0a0a0"/><rect x="45" y="340" width="1" height="1" fill="#b4b4b4"/><rect x="46" y="320" width="1" height="1" fill="#8a8a8a"/><rect x="44" y="315" width="1" height="1" fill="#b4b4b4"/><rect x="18" y="301" width="1" height="1" fill="#6a6a6a"/><rect x="32" y="342" width="1" height="1" fill="#8a8a8a"/><rect x="18" y="319" width="1" height="1" fill="#6a6a6a"/><rect x="25" y="334" width="1" height="1" fill="#5a5a5a"/><rect x="20" y="299" width="1" height="1" fill="#6a6a6a"/><rect x="36" y="298" width="1" height="1" fill="#7a7a7a"/><rect x="53" y="302" width="1" height="1" fill="#a0a0a0"/><rect x="21" y="307" width="1" height="1" fill="#fafafa"/><rect x="43" y="327" width="1" height="1" fill="#7a7a7a"/><rect x="47" y="326" width="1" height="1" fill="#fafafa"/><rect x="23" y="310" width="1" height="1" fill="#fafafa"/><rect x="26" y="326" width="1" height="1" fill="#6a6a6a"/><rect x="39" y="334" width="1" height="1" fill="#5a5a5a"/><rect x="18" y="326" width="1" height="1" fill="#a0a0a0"/><rect x="39" y="305" width="1" height="1" fill="#9a9a9a"/><rect x="32" y="309" width="1" height="1" fill="#7a7a7a"/><rect x="38" y="337" width="1" height="1" fill="#8a8a8a"/><rect x="51" y="300" width="1" height="1" fill="#a0a0a0"/><rect x="13" y="321" width="1" height="1" fill="#8a8a8a"/><rect x="25" y="330" width="1" height="1" fill="#b4b4b4"/><rect x="16" y="330" width="1" height="1" fill="#b4b4b4"/><rect x="37" y="324" width="1" height="1" fill="#5a5a5a"/><rect x="34" y="311" width="1" height="1" fill="#b4b4b4"/><rect x="50" y="323" width="1" height="1" fill="#ffffff"/><rect x="29" y="320" width="1" height="1" fill="#a0a0a0"/><rect x="21" y="302" width="1" height="1" fill="#6a6a6a"/><rect x="12" y="319" width="1" height="1" fill="#8a8a8a"/><rect x="38" y="324" width="1" height="1" fill="#7a7a7a"/><rect x="47" y="340" width="1" height="1" fill="#6a6a6a"/><rect x="30" y="309" width="1" height="1" fill="#fafafa"/><rect x="25" y="301" width="1" height="1" fill="#6a6a6a"/><rect x="25" y="327" width="1" height="1" fill="#5a5a5a"/><rect x="10" y="315" width="1" height="1" fill="#9a9a9a"/><rect x="12" y="311" width="1" height="1" fill="#9a9a9a"/><rect x="15" y="318" width="1" height="1" fill="#6a6a6a"/><rect x="50" y="323" width="1" height="1" fill="#8a8a8a"/><rect x="35" y="336" width="1" height="1" fill="#8a8a8a"/><rect x="42" y="316" width="1" height="1" fill="#7a7a7a"/><rect x="24" y="299" width="1" height="1" fill="#fafafa"/><rect x="19" y="324" width="1" height="1" fill="#a0a0a0"/><rect x="12" y="321" width="1" height="1" fill="#9a9a9a"/><rect x="34" y="320" width="1" height="1" fill="#b4b4b4"/><rect x="44" y="333" width="1" height="1" fill="#6a6a6a"/><rect x="49" y="324" width="1" height="1" fill="#7a7a7a"/><rect x="50" y="328" width="1" height="1" fill="#6a6a6a"/><rect x="29" y="310" width="1" height="1" fill="#5a5a5a"/><rect x="16" y="322" width="1" height="1" fill="#7a7a7a"/><rect x="33" y="336" width="1" height="1" fill="#8a8a8a"/><rect x="31" y="324" width="1" height="1" fill="#fafafa"/><rect x="51" y="341" width="1" height="1" fill="#5a5a5a"/><rect x="32" y="322" width="1" height="1" fill="#5a5a5a"/><rect x="45" y="321" width="1" height="1" fill="#8a8a8a"/><rect x="27" y="302" width="1" height="1" fill="#9a9a9a"/><rect x="46" y="317" width="1" height="1" fill="#b4b4b4"/><rect x="38" y="334" width="1" height="1" fill="#5a5a5a"/><rect x="33" y="311" width="1" height="1" fill="#ffffff"/><rect x="52" y="318" width="1" height="1" fill="#9a9a9a"/><rect x="46" y="321" width="1" height="1" fill="#ffffff"/><rect x="30" y="309" width="1" height="1" fill="#6a6a6a"/><rect x="13" y="301" width="1" height="1" fill="#fafafa"/><rect x="30" y="310" width="1" height="1" fill="#8a8a8a"/><rect x="48" y="312" width="1" height="1" fill="#a0a0a0"/><rect x="31" y="341" width="1" height="1" fill="#5a5a5a"/><rect x="45" y="336" width="1" height="1" fill="#7a7a7a"/><rect x="12" y="308" width="1" height="1" fill="#b4b4b4"/><rect x="16" y="330" width="1" height="1" fill="#a0a0a0"/><rect x="9" y="299" width="1" height="1" fill="#5a5a5a"/><rect x="41" y="312" width="1" height="1" fill="#9a9a9a"/><rect x="23" y="301" width="1" height="1" fill="#b4b4b4"/><rect x="15" y="322" width="1" height="1" fill="#6a6a6a"/><rect x="26" y="313" width="1" height="1" fill="#ffffff"/><rect x="37" y="312" width="1" height="1" fill="#a0a0a0"/><rect x="32" y="321" width="1" height="1" fill="#b4b4b4"/><rect x="12" y="298" width="1" height="1" fill="#7a7a7a"/><rect x="28" y="303" width="1" height="1" fill="#6a6a6a"/><rect x="16" y="304" width="1" height="1" fill="#a0a0a0"/><rect x="28" y="312" width="1" height="1" fill="#ffffff"/><rect x="10" y="327" width="1" height="1" fill="#7a7a7a"/><rect x="38" y="304" width="1" height="1" fill="#9a9a9a"/><rect x="24" y="307" width="1" height="1" fill="#ffffff"/><rect x="45" y="318" width="1" height="1" fill="#6a6a6a"/><rect x="43" y="302" width="1" height="1" fill="#6a6a6a"/><rect x="49" y="332" width="1" height="1" fill="#ffffff"/><rect x="9" y="337" width="1" height="1" fill="#6a6a6a"/><rect x="15" y="319" width="1" height="1" fill="#8a8a8a"/><rect x="30" y="300" width="1" height="1" fill="#8a8a8a"/><rect x="12" y="339" width="1" height="1" fill="#a0a0a0"/><rect x="52" y="333" width="1" height="1" fill="#6a6a6a"/><rect x="34" y="336" width="1" height="1" fill="#5a5a5a"/><rect x="46" y="336" width="1" height="1" fill="#b4b4b4"/><rect x="52" y="332" width="1" height="1" fill="#6a6a6a"/><rect x="24" y="301" width="1" height="1" fill="#a0a0a0"/><rect x="24" y="310" width="1" height="1" fill="#fafafa"/><rect x="14" y="333" width="1" height="1" fill="#6a6a6a"/><rect x="22" y="331" width="1" height="1" fill="#fafafa"/><rect x="29" y="325" width="1" height="1" fill="#8a8a8a"/><rect x="10" y="316" width="1" height="1" fill="#8a8a8a"/><rect x="10" y="298" width="1" height="1" fill="#8a8a8a"/><rect x="25" y="318" width="1" height="1" fill="#ffffff"/><rect x="33" y="313" width="1" height="1" fill="#9a9a9a"/><rect x="13" y="299" width="1" height="1" fill="#8a8a8a"/><rect x="33" y="308" width="1" height="1" fill="#8a8a8a"/><rect x="15" y="335" width="1" height="1" fill="#a0a0a0"/><rect x="13" y="340" width="1" height="1" fill="#5a5a5a"/><rect x="48" y="310" width="1" height="1" fill="#6a6a6a"/><rect x="30" y="302" width="1" height="1" fill="#5a5a5a"/><rect x="39" y="335" width="1" height="1" fill="#6a6a6a"/><rect x="22" y="331" width="1" height="1" fill="#7a7a7a"/><rect x="28" y="319" width="1" height="1" fill="#fafafa"/><rect x="35" y="321" width="1" height="1" fill="#8a8a8a"/><rect x="31" y="304" width="1" height="1" fill="#7a7a7a"/><rect x="52" y="321" width="1" height="1" fill="#a0a0a0"/><rect x="28" y="341" width="1" height="1" fill="#a0a0a0"/><rect x="38" y="307" width="1" height="1" fill="#fafafa"/><rect x="38" y="330" width="1" height="1" fill="#7a7a7a"/><rect x="46" y="311" width="1" height="1" fill="#a0a0a0"/><rect x="13" y="314" width="1" height="1" fill="#fafafa"/><rect x="10" y="308" width="1" height="1" fill="#ffffff"/><rect x="15" y="322" width="1" height="1" fill="#6a6a6a"/><rect x="36" y="302" width="1" height="1" fill="#5a5a5a"/><rect x="22" y="330" width="1" height="1" fill="#8a8a8a"/><rect x="14" y="311" width="1" height="1" fill="#fafafa"/><rect x="35" y="300" width="1" height="1" fill="#6a6a6a"/><rect x="45" y="316" width="1" height="1" fill="#7a7a7a"/><rect x="46" y="338" width="1" height="1" fill="#a0a0a0"/><rect x="14" y="300" width="1" height="1" fill="#8a8a8a"/><rect x="40" y="342" width="1" height="1" fill="#fafafa"/><rect x="36" y="332" width="1" height="1" fill="#7a7a7a"/><rect x="52" y="328" width="1" height="1" fill="#ffffff"/><rect x="31" y="338" width="1" height="1" fill="#b4b4b4"/><rect x="44" y="306" width="1" height="1" fill="#ffffff"/><rect x="40" y="327" width="1" height="1" fill="#5a5a5a"/><rect x="18" y="339" width="1" height="1" fill="#ffffff"/><rect x="35" y="300" width="1" height="1" fill="#8a8a8a"/><rect x="50" y="308" width="1" height="1" fill="#a0a0a0"/><rect x="10" y="327" width="1" height="1" fill="#5a5a5a"/><rect x="18" y="307" width="1" height="1" fill="#b4b4b4"/><rect x="43" y="331" width="1" height="1" fill="#6a6a6a"/><rect x="41" y="325" width="1" height="1" fill="#a0a0a0"/><rect x="18" y="325" width="1" height="1" fill="#5a5a5a"/><rect x="35" y="334" width="1" height="1" fill="#5a5a5a"/><rect x="43" y="301" width="1" height="1" fill="#6a6a6a"/><rect x="41" y="304" width="1" height="1" fill="#5a5a5a"/><rect x="30" y="334" width="1" height="1" fill="#fafafa"/><rect x="11" y="300" width="1" height="1" fill="#5a5a5a"/><rect x="18" y="337" width="1" height="1" fill="#8a8a8a"/><rect x="28" y="302" width="1" height="1" fill="#9a9a9a"/><rect x="28" y="298" width="1" height="1" fill="#8a8a8a"/><rect x="32" y="303" width="1" height="1" fill="#9a9a9a"/><rect x="21" y="313" width="1" height="1" fill="#9a9a9a"/><rect x="21" y="318" width="1" height="1" fill="#8a8a8a"/><rect x="40" y="326" width="1" height="1" fill="#7a7a7a"/><rect x="36" y="319" width="1" height="1" fill="#ffffff"/><rect x="48" y="333" width="1" height="1" fill="#7a7a7a"/><rect x="34" y="333" width="1" height="1" fill="#ffffff"/><rect x="23" y="336" width="1" height="1" fill="#7a7a7a"/><rect x="26" y="307" width="1" height="1" fill="#9a9a9a"/><rect x="45" y="309" width="1" height="1" fill="#fafafa"/><rect x="26" y="304" width="1" height="1" fill="#6a6a6a"/><rect x="34" y="335" width="1" height="1" fill="#a0a0a0"/><rect x="45" y="334" width="1" height="1" fill="#7a7a7a"/><rect x="31" y="299" width="1" height="1" fill="#b4b4b4"/><rect x="45" y="303" width="1" height="1" fill="#a0a0a0"/><rect x="38" y="339" width="1" height="1" fill="#ffffff"/><rect x="9" y="325" width="1" height="1" fill="#5a5a5a"/><rect x="11" y="325" width="1" height="1" fill="#5a5a5a"/><rect x="41" y="327" width="1" height="1" fill="#fafafa"/><rect x="23" y="306" width="1" height="1" fill="#5a5a5a"/><rect x="51" y="336" width="1" height="1" fill="#fafafa"/><rect x="31" y="327" width="1" height="1" fill="#5a5a5a"/><rect x="13" y="308" width="1" height="1" fill="#7a7a7a"/><rect x="36" y="323" width="1" height="1" fill="#fafafa"/><rect x="47" y="323" width="1" height="1" fill="#ffffff"/><rect x="34" y="323" width="1" height="1" fill="#fafafa"/><rect x="52" y="338" width="1" height="1" fill="#8a8a8a"/><rect x="44" y="316" width="1" height="1" fill="#ffffff"/><rect x="37" y="309" width="1" height="1" fill="#6a6a6a"/><rect x="13" y="329" width="1" height="1" fill="#a0a0a0"/><rect x="21" y="325" width="1" height="1" fill="#ffffff"/><rect x="52" y="338" width="1" height="1" fill="#ffffff"/><rect x="43" y="321" width="1" height="1" fill="#6a6a6a"/><rect x="30" y="310" width="1" height="1" fill="#8a8a8a"/><rect x="34" y="336" width="1" height="1" fill="#5a5a5a"/><rect x="28" y="337" width="1" height="1" fill="#8a8a8a"/><rect x="30" y="300" width="1" height="1" fill="#5a5a5a"/><rect x="15" y="326" width="1" height="1" fill="#ffffff"/><rect x="38" y="323" width="1" height="1" fill="#9a9a9a"/><rect x="45" y="338" width="1" height="1" fill="#5a5a5a"/><rect x="31" y="315" width="1" height="1" fill="#6a6a6a"/><rect x="50" y="332" width="1" height="1" fill="#fafafa"/><rect x="13" y="305" width="1" height="1" fill="#b4b4b4"/><rect x="38" y="309" width="1" height="1" fill="#7a7a7a"/><rect x="25" y="311" width="1" height="1" fill="#5a5a5a"/><rect x="35" y="304" width="1" height="1" fill="#ffffff"/><rect x="42" y="340" width="1" height="1" fill="#ffffff"/><rect x="21" y="338" width="1" height="1" fill="#b4b4b4"/><rect x="36" y="342" width="1" height="1" fill="#6a6a6a"/><rect x="29" y="336" width="1" height="1" fill="#6a6a6a"/><rect x="40" y="333" width="1" height="1" fill="#7a7a7a"/><rect x="30" y="339" width="1" height="1" fill="#8a8a8a"/><rect x="14" y="325" width="1" height="1" fill="#a0a0a0"/><rect x="11" y="324" width="1" height="1" fill="#b4b4b4"/><rect x="48" y="337" width="1" height="1" fill="#8a8a8a"/><rect x="29" y="334" width="1" height="1" fill="#9a9a9a"/><rect x="10" y="310" width="1" height="1" fill="#5a5a5a"/><rect x="34" y="324" width="1" height="1" fill="#8a8a8a"/><rect x="34" y="330" width="1" height="1" fill="#9a9a9a"/><rect x="25" y="332" width="1" height="1" fill="#8a8a8a"/><rect x="49" y="313" width="1" height="1" fill="#9a9a9a"/><rect x="51" y="334" width="1" height="1" fill="#5a5a5a"/><rect x="32" y="330" width="1" height="1" fill="#b4b4b4"/><rect x="36" y="304" width="1" height="1" fill="#8a8a8a"/><rect x="52" y="310" width="1" height="1" fill="#b4b4b4"/><rect x="36" y="330" width="1" height="1" fill="#9a9a9a"/><rect x="34" y="335" width="1" height="1" fill="#6a6a6a"/><rect x="19" y="313" width="1" height="1" fill="#8a8a8a"/><rect x="28" y="322" width="1" height="1" fill="#fafafa"/><rect x="37" y="328" width="1" height="1" fill="#6a6a6a"/><rect x="47" y="336" width="1" height="1" fill="#6a6a6a"/><rect x="33" y="308" width="1" height="1" fill="#a0a0a0"/><rect x="27" y="334" width="1" height="1" fill="#ffffff"/><rect x="42" y="303" width="1" height="1" fill="#6a6a6a"/><rect x="36" y="299" width="1" height="1" fill="#9a9a9a"/><rect x="39" y="312" width="1" height="1" fill="#8a8a8a"/><rect x="12" y="315" width="1" height="1" fill="#b4b4b4"/><rect x="24" y="300" width="1" height="1" fill="#a0a0a0"/><rect x="43" y="342" width="1" height="1" fill="#6a6a6a"/><rect x="49" y="317" width="1" height="1" fill="#6a6a6a"/><rect x="33" y="325" width="1" height="1" fill="#5a5a5a"/><rect x="48" y="309" width="1" height="1" fill="#9a9a9a"/><rect x="25" y="301" width="1" height="1" fill="#b4b4b4"/><rect x="12" y="339" width="1" height="1" fill="#8a8a8a"/><rect x="44" y="333" width="1" height="1" fill="#a0a0a0"/><rect x="28" y="313" width="1" height="1" fill="#6a6a6a"/><rect x="47" y="326" width="1" height="1" fill="#b4b4b4"/><rect x="24" y="309" width="1" height="1" fill="#8a8a8a"/><rect x="32" y="338" width="1" height="1" fill="#fafafa"/><rect x="40" y="332" width="1" height="1" fill="#ffffff"/><rect x="34" y="300" width="1" height="1" fill="#8a8a8a"/><rect x="17" y="328" width="1" height="1" fill="#7a7a7a"/><rect x="29" y="339" width="1" height="1" fill="#5a5a5a"/><rect x="14" y="342" width="1" height="1" fill="#7a7a7a"/><rect x="39" y="340" width="1" height="1" fill="#fafafa"/><rect x="15" y="313" width="1" height="1" fill="#8a8a8a"/><rect x="13" y="324" width="1" height="1" fill="#ffffff"/><rect x="33" y="342" width="1" height="1" fill="#b4b4b4"/><rect x="20" y="334" width="1" height="1" fill="#fafafa"/><rect x="16" y="313" width="1" height="1" fill="#a0a0a0"/><rect x="39" y="301" width="1" height="1" fill="#ffffff"/><rect x="14" y="336" width="1" height="1" fill="#7a7a7a"/><rect x="51" y="326" width="1" height="1" fill="#b4b4b4"/><rect x="39" y="333" width="1" height="1" fill="#9a9a9a"/><rect x="42" y="309" width="1" height="1" fill="#9a9a9a"/><rect x="24" y="315" width="1" height="1" fill="#a0a0a0"/><rect x="24" y="328" width="1" height="1" fill="#b4b4b4"/><rect x="53" y="298" width="1" height="1" fill="#5a5a5a"/><rect x="15" y="321" width="1" height="1" fill="#5a5a5a"/><rect x="50" y="321" width="1" height="1" fill="#fafafa"/><rect x="53" y="299" width="1" height="1" fill="#a0a0a0"/><rect x="46" y="307" width="1" height="1" fill="#fafafa"/><rect x="30" y="322" width="1" height="1" fill="#a0a0a0"/><rect x="39" y="317" width="1" height="1" fill="#b4b4b4"/><rect x="42" y="302" width="1" height="1" fill="#fafafa"/><rect x="35" y="326" width="1" height="1" fill="#9a9a9a"/><rect x="33" y="320" width="1" height="1" fill="#5a5a5a"/><rect x="53" y="301" width="1" height="1" fill="#9a9a9a"/><rect x="36" y="342" width="1" height="1" fill="#7a7a7a"/><rect x="39" y="341" width="1" height="1" fill="#8a8a8a"/><rect x="9" y="332" width="1" height="1" fill="#fafafa"/><rect x="26" y="308" width="1" height="1" fill="#a0a0a0"/><rect x="48" y="339" width="1" height="1" fill="#b4b4b4"/><rect x="9" y="305" width="1" height="1" fill="#6a6a6a"/><rect x="33" y="303" width="1" height="1" fill="#5a5a5a"/><rect x="49" y="309" width="1" height="1" fill="#5a5a5a"/><rect x="30" y="319" width="1" height="1" fill="#5a5a5a"/><rect x="41" y="334" width="1" height="1" fill="#8a8a8a"/><rect x="24" y="305" width="1" height="1" fill="#9a9a9a"/><rect x="52" y="303" width="1" height="1" fill="#7a7a7a"/><rect x="19" y="323" width="1" height="1" fill="#ffffff"/><rect x="20" y="331" width="1" height="1" fill="#8a8a8a"/><rect x="23" y="313" width="1" height="1" fill="#7a7a7a"/><rect x="26" y="339" width="1" height="1" fill="#7a7a7a"/><rect x="46" y="301" width="1" height="1" fill="#b4b4b4"/><rect x="40" y="333" width="1" height="1" fill="#b4b4b4"/><rect x="47" y="334" width="1" height="1" fill="#a0a0a0"/><rect x="43" y="338" width="1" height="1" fill="#ffffff"/><rect x="51" y="320" width="1" height="1" fill="#9a9a9a"/><rect x="10" y="307" width="1" height="1" fill="#fafafa"/><rect x="31" y="332" width="1" height="1" fill="#ffffff"/><rect x="45" y="335" width="1" height="1" fill="#a0a0a0"/><rect x="21" y="307" width="1" height="1" fill="#b4b4b4"/><rect x="11" y="331" width="1" height="1" fill="#ffffff"/><rect x="51" y="335" width="1" height="1" fill="#7a7a7a"/><rect x="18" y="339" width="1" height="1" fill="#a0a0a0"/><rect x="23" y="300" width="1" height="1" fill="#7a7a7a"/><rect x="14" y="333" width="1" height="1" fill="#6a6a6a"/><rect x="13" y="339" width="1" height="1" fill="#5a5a5a"/><rect x="22" y="337" width="1" height="1" fill="#8a8a8a"/><rect x="9" y="314" width="1" height="1" fill="#5a5a5a"/><rect x="34" y="321" width="1" height="1" fill="#8a8a8a"/><rect x="15" y="317" width="1" height="1" fill="#ffffff"/><rect x="9" y="321" width="1" height="1" fill="#fafafa"/><rect x="32" y="338" width="1" height="1" fill="#8a8a8a"/><rect x="14" y="336" width="1" height="1" fill="#7a7a7a"/><rect x="31" y="336" width="1" height="1" fill="#7a7a7a"/><rect x="39" y="312" width="1" height="1" fill="#8a8a8a"/><rect x="53" y="339" width="1" height="1" fill="#fafafa"/><rect x="16" y="315" width="1" height="1" fill="#6a6a6a"/><rect x="49" y="315" width="1" height="1" fill="#9a9a9a"/><rect x="39" y="303" width="1" height="1" fill="#5a5a5a"/><rect x="46" y="321" width="1" height="1" fill="#7a7a7a"/><rect x="51" y="335" width="1" height="1" fill="#9a9a9a"/><rect x="17" y="311" width="1" height="1" fill="#fafafa"/><rect x="30" y="303" width="1" height="1" fill="#b4b4b4"/><rect x="9" y="329" width="1" height="1" fill="#ffffff"/><rect x="32" y="334" width="1" height="1" fill="#a0a0a0"/><rect x="32" y="333" width="1" height="1" fill="#7a7a7a"/><rect x="26" y="302" width="1" height="1" fill="#9a9a9a"/><rect x="53" y="330" width="1" height="1" fill="#7a7a7a"/><rect x="9" y="328" width="1" height="1" fill="#ffffff"/><rect x="50" y="300" width="1" height="1" fill="#ffffff"/><rect x="15" y="310" width="1" height="1" fill="#5a5a5a"/><rect x="13" y="341" width="1" height="1" fill="#a0a0a0"/><rect x="28" y="332" width="1" height="1" fill="#ffffff"/><rect x="49" y="302" width="1" height="1" fill="#a0a0a0"/><rect x="42" y="339" width="1" height="1" fill="#ffffff"/><rect x="27" y="330" width="1" height="1" fill="#b4b4b4"/><rect x="38" y="333" width="1" height="1" fill="#5a5a5a"/><rect x="19" y="325" width="1" height="1" fill="#7a7a7a"/><rect x="21" y="328" width="1" height="1" fill="#fafafa"/><rect x="53" y="308" width="1" height="1" fill="#ffffff"/><rect x="24" y="313" width="1" height="1" fill="#ffffff"/><rect x="11" y="310" width="1" height="1" fill="#a0a0a0"/><rect x="40" y="334" width="1" height="1" fill="#fafafa"/><rect x="33" y="315" width="1" height="1" fill="#7a7a7a"/><rect x="18" y="342" width="1" height="1" fill="#5a5a5a"/><rect x="26" y="299" width="1" height="1" fill="#8a8a8a"/><rect x="52" y="303" width="1" height="1" fill="#fafafa"/><rect x="25" y="332" width="1" height="1" fill="#a0a0a0"/><rect x="15" y="301" width="1" height="1" fill="#6a6a6a"/><rect x="42" y="321" width="1" height="1" fill="#9a9a9a"/><rect x="43" y="314" width="1" height="1" fill="#a0a0a0"/><rect x="50" y="310" width="1" height="1" fill="#ffffff"/><rect x="39" y="326" width="1" height="1" fill="#7a7a7a"/><rect x="26" y="321" width="1" height="1" fill="#5a5a5a"/><rect x="51" y="331" width="1" height="1" fill="#9a9a9a"/><rect x="11" y="322" width="1" height="1" fill="#9a9a9a"/><rect x="30" y="319" width="1" height="1" fill="#7a7a7a"/><rect x="22" y="320" width="1" height="1" fill="#fafafa"/><rect x="27" y="310" width="1" height="1" fill="#b4b4b4"/><rect x="10" y="311" width="1" height="1" fill="#fafafa"/><rect x="19" y="312" width="1" height="1" fill="#fafafa"/><rect x="35" y="300" width="1" height="1" fill="#b4b4b4"/><rect x="35" y="302" width="1" height="1" fill="#6a6a6a"/><rect x="41" y="312" width="1" height="1" fill="#a0a0a0"/><rect x="31" y="334" width="1" height="1" fill="#8a8a8a"/><rect x="32" y="317" width="1" height="1" fill="#7a7a7a"/><rect x="39" y="333" width="1" height="1" fill="#6a6a6a"/><rect x="38" y="301" width="1" height="1" fill="#9a9a9a"/><rect x="37" y="339" width="1" height="1" fill="#fafafa"/><rect x="47" y="340" width="1" height="1" fill="#fafafa"/><rect x="22" y="322" width="1" height="1" fill="#ffffff"/><rect x="40" y="324" width="1" height="1" fill="#7a7a7a"/><rect x="26" y="337" width="1" height="1" fill="#8a8a8a"/><rect x="29" y="334" width="1" height="1" fill="#a0a0a0"/><rect x="34" y="328" width="1" height="1" fill="#fafafa"/><rect x="44" y="335" width="1" height="1" fill="#6a6a6a"/><rect x="9" y="306" width="1" height="1" fill="#5a5a5a"/><rect x="28" y="312" width="1" height="1" fill="#b4b4b4"/><rect x="19" y="324" width="1" height="1" fill="#9a9a9a"/><rect x="38" y="315" width="1" height="1" fill="#a0a0a0"/><rect x="18" y="308" width="1" height="1" fill="#ffffff"/><rect x="28" y="306" width="1" height="1" fill="#5a5a5a"/><rect x="36" y="336" width="1" height="1" fill="#6a6a6a"/><rect x="11" y="331" width="1" height="1" fill="#b4b4b4"/><rect x="46" y="312" width="1" height="1" fill="#fafafa"/><rect x="38" y="308" width="1" height="1" fill="#9a9a9a"/><rect x="42" y="308" width="1" height="1" fill="#fafafa"/><rect x="15" y="322" width="1" height="1" fill="#a0a0a0"/><rect x="48" y="318" width="1" height="1" fill="#fafafa"/><rect x="22" y="318" width="1" height="1" fill="#fafafa"/><rect x="39" y="299" width="1" height="1" fill="#7a7a7a"/><rect x="51" y="319" width="1" height="1" fill="#8a8a8a"/><rect x="28" y="309" width="1" height="1" fill="#5a5a5a"/><rect x="26" y="302" width="1" height="1" fill="#9a9a9a"/><rect x="17" y="334" width="1" height="1" fill="#ffffff"/><rect x="23" y="312" width="1" height="1" fill="#6a6a6a"/><rect x="32" y="316" width="1" height="1" fill="#7a7a7a"/><rect x="15" y="340" width="1" height="1" fill="#8a8a8a"/><rect x="45" y="324" width="1" height="1" fill="#9a9a9a"/><rect x="33" y="322" width="1" height="1" fill="#b4b4b4"/><rect x="38" y="341" width="1" height="1" fill="#5a5a5a"/><rect x="11" y="318" width="1" height="1" fill="#a0a0a0"/><rect x="43" y="306" width="1" height="1" fill="#ffffff"/><rect x="18" y="320" width="1" height="1" fill="#9a9a9a"/><rect x="17" y="342" width="1" height="1" fill="#5a5a5a"/><rect x="40" y="320" width="1" height="1" fill="#fafafa"/><rect x="45" y="329" width="1" height="1" fill="#ffffff"/><rect x="31" y="341" width="1" height="1" fill="#ffffff"/><rect x="20" y="318" width="1" height="1" fill="#7a7a7a"/><rect x="31" y="321" width="1" height="1" fill="#6a6a6a"/><rect x="53" y="310" width="1" height="1" fill="#ffffff"/><rect x="40" y="342" width="1" height="1" fill="#fafafa"/><rect x="53" y="298" width="1" height="1" fill="#9a9a9a"/><rect x="38" y="318" width="1" height="1" fill="#8a8a8a"/><rect x="12" y="338" width="1" height="1" fill="#5a5a5a"/><rect x="11" y="314" width="1" height="1" fill="#6a6a6a"/><rect x="19" y="337" width="1" height="1" fill="#fafafa"/><rect x="13" y="325" width="1" height="1" fill="#7a7a7a"/><rect x="41" y="332" width="1" height="1" fill="#ffffff"/><rect x="12" y="334" width="1" height="1" fill="#9a9a9a"/><rect x="39" y="298" width="1" height="1" fill="#ffffff"/><rect x="53" y="330" width="1" height="1" fill="#a0a0a0"/><rect x="41" y="306" width="1" height="1" fill="#7a7a7a"/><rect x="50" y="299" width="1" height="1" fill="#9a9a9a"/><rect x="49" y="314" width="1" height="1" fill="#fafafa"/><rect x="46" y="326" width="1" height="1" fill="#9a9a9a"/><rect x="44" y="335" width="1" height="1" fill="#6a6a6a"/><rect x="19" y="301" width="1" height="1" fill="#5a5a5a"/><rect x="39" y="319" width="1" height="1" fill="#5a5a5a"/><rect x="22" y="331" width="1" height="1" fill="#b4b4b4"/><rect x="46" y="339" width="1" height="1" fill="#5a5a5a"/><rect x="14" y="302" width="1" height="1" fill="#ffffff"/><rect x="31" y="315" width="1" height="1" fill="#ffffff"/><rect x="35" y="312" width="1" height="1" fill="#fafafa"/><rect x="21" y="306" width="1" height="1" fill="#7a7a7a"/><rect x="45" y="320" width="1" height="1" fill="#b4b4b4"/><rect x="17" y="309" width="1" height="1" fill="#7a7a7a"/><rect x="31" y="301" width="1" height="1" fill="#fafafa"/><rect x="37" y="323" width="1" height="1" fill="#6a6a6a"/><rect x="11" y="335" width="1" height="1" fill="#8a8a8a"/><rect x="44" y="318" width="1" height="1" fill="#b4b4b4"/><rect x="38" y="323" width="1" height="1" fill="#6a6a6a"/><rect x="25" y="307" width="1" height="1" fill="#7a7a7a"/><rect x="44" y="319" width="1" height="1" fill="#b4b4b4"/><rect x="35" y="323" width="1" height="1" fill="#fafafa"/><rect x="38" y="314" width="1" height="1" fill="#7a7a7a"/><rect x="41" y="313" width="1" height="1" fill="#fafafa"/><rect x="31" y="301" width="1" height="1" fill="#fafafa"/><rect x="23" y="301" width="1" height="1" fill="#a0a0a0"/><rect x="47" y="303" width="1" height="1" fill="#ffffff"/><rect x="11" y="309" width="1" height="1" fill="#9a9a9a"/><rect x="25" y="320" width="1" height="1" fill="#fafafa"/><rect x="28" y="334" width="1" height="1" fill="#9a9a9a"/><rect x="42" y="342" width="1" height="1" fill="#7a7a7a"/><rect x="40" y="311" width="1" height="1" fill="#ffffff"/><rect x="37" y="322" width="1" height="1" fill="#ffffff"/><rect x="37" y="325" width="1" height="1" fill="#8a8a8a"/><rect x="16" y="313" width="1" height="1" fill="#ffffff"/><rect x="48" y="305" width="1" height="1" fill="#6a6a6a"/><rect x="30" y="319" width="1" height="1" fill="#b4b4b4"/><rect x="48" y="304" width="1" height="1" fill="#6a6a6a"/><rect x="27" y="301" width="1" height="1" fill="#b4b4b4"/><rect x="37" y="320" width="1" height="1" fill="#7a7a7a"/><rect x="16" y="341" width="1" height="1" fill="#5a5a5a"/><rect x="14" y="315" width="1" height="1" fill="#b4b4b4"/><rect x="20" y="298" width="1" height="1" fill="#6a6a6a"/><rect x="12" y="313" width="1" height="1" fill="#7a7a7a"/><rect x="48" y="299" width="1" height="1" fill="#ffffff"/><rect x="16" y="316" width="1" height="1" fill="#5a5a5a"/><rect x="32" y="309" width="1" height="1" fill="#7a7a7a"/><rect x="42" y="341" width="1" height="1" fill="#a0a0a0"/><rect x="49" y="311" width="1" height="1" fill="#ffffff"/><rect x="25" y="342" width="1" height="1" fill="#9a9a9a"/><rect x="13" y="298" width="1" height="1" fill="#a0a0a0"/><rect x="33" y="303" width="1" height="1" fill="#a0a0a0"/><rect x="13" y="326" width="1" height="1" fill="#fafafa"/><rect x="49" y="328" width="1" height="1" fill="#9a9a9a"/><rect x="11" y="321" width="1" height="1" fill="#b4b4b4"/><rect x="32" y="329" width="1" height="1" fill="#6a6a6a"/><rect x="32" y="331" width="1" height="1" fill="#5a5a5a"/><rect x="49" y="311" width="1" height="1" fill="#ffffff"/><rect x="44" y="328" width="1" height="1" fill="#fafafa"/><rect x="27" y="327" width="1" height="1" fill="#6a6a6a"/><rect x="50" y="305" width="1" height="1" fill="#b4b4b4"/><rect x="49" y="303" width="1" height="1" fill="#6a6a6a"/><rect x="51" y="328" width="1" height="1" fill="#5a5a5a"/><rect x="30" y="320" width="1" height="1" fill="#ffffff"/><rect x="21" y="315" width="1" height="1" fill="#6a6a6a"/><rect x="14" y="301" width="1" height="1" fill="#fafafa"/><rect x="10" y="323" width="1" height="1" fill="#ffffff"/><rect x="37" y="304" width="1" height="1" fill="#fafafa"/><rect x="46" y="334" width="1" height="1" fill="#a0a0a0"/><rect x="24" y="341" width="1" height="1" fill="#fafafa"/><rect x="28" y="324" width="1" height="1" fill="#a0a0a0"/><rect x="43" y="313" width="1" height="1" fill="#5a5a5a"/><rect x="42" y="306" width="1" height="1" fill="#8a8a8a"/><rect x="50" y="329" width="1" height="1" fill="#8a8a8a"/><rect x="26" y="332" width="1" height="1" fill="#ffffff"/><rect x="37" y="338" width="1" height="1" fill="#b4b4b4"/><rect x="50" y="342" width="1" height="1" fill="#9a9a9a"/><rect x="45" y="314" width="1" height="1" fill="#ffffff"/><rect x="16" y="316" width="1" height="1" fill="#9a9a9a"/><rect x="20" y="339" width="1" height="1" fill="#6a6a6a"/><rect x="13" y="338" width="1" height="1" fill="#fafafa"/><rect x="42" y="305" width="1" height="1" fill="#9a9a9a"/><rect x="44" y="331" width="1" height="1" fill="#b4b4b4"/><rect x="42" y="338" width="1" height="1" fill="#9a9a9a"/><rect x="38" y="340" width="1" height="1" fill="#ffffff"/><rect x="16" y="336" width="1" height="1" fill="#fafafa"/><rect x="35" y="330" width="1" height="1" fill="#fafafa"/><rect x="11" y="301" width="1" height="1" fill="#9a9a9a"/><rect x="29" y="304" width="1" height="1" fill="#a0a0a0"/><rect x="52" y="299" width="1" height="1" fill="#ffffff"/><rect x="39" y="300" width="1" height="1" fill="#9a9a9a"/><rect x="35" y="334" width="1" height="1" fill="#a0a0a0"/><rect x="42" y="333" width="1" height="1" fill="#b4b4b4"/><rect x="20" y="312" width="1" height="1" fill="#b4b4b4"/><rect x="47" y="313" width="1" height="1" fill="#fafafa"/><rect x="50" y="313" width="1" height="1" fill="#8a8a8a"/><rect x="11" y="317" width="1" height="1" fill="#b4b4b4"/><rect x="9" y="299" width="1" height="1" fill="#ffffff"/><rect x="36" y="308" width="1" height="1" fill="#a0a0a0"/><rect x="10" y="317" width="1" height="1" fill="#a0a0a0"/><rect x="28" y="308" width="1" height="1" fill="#6a6a6a"/><rect x="27" y="336" width="1" height="1" fill="#9a9a9a"/><rect x="50" y="310" width="1" height="1" fill="#a0a0a0"/><rect x="39" y="327" width="1" height="1" fill="#b4b4b4"/><rect x="31" y="308" width="1" height="1" fill="#b4b4b4"/><rect x="53" y="337" width="1" height="1" fill="#7a7a7a"/><rect x="43" y="336" width="1" height="1" fill="#ffffff"/><rect x="36" y="342" width="1" height="1" fill="#fafafa"/><rect x="46" y="316" width="1" height="1" fill="#9a9a9a"/><rect x="14" y="320" width="1" height="1" fill="#a0a0a0"/><rect x="15" y="318" width="1" height="1" fill="#7a7a7a"/><rect x="36" y="303" width="1" height="1" fill="#ffffff"/><rect x="12" y="321" width="1" height="1" fill="#ffffff"/><rect x="41" y="309" width="1" height="1" fill="#9a9a9a"/><rect x="51" y="323" width="1" height="1" fill="#9a9a9a"/><rect x="32" y="311" width="1" height="1" fill="#8a8a8a"/><rect x="34" y="312" width="1" height="1" fill="#8a8a8a"/><rect x="13" y="338" width="1" height="1" fill="#5a5a5a"/><rect x="20" y="333" width="1" height="1" fill="#8a8a8a"/><rect x="16" y="303" width="1" height="1" fill="#9a9a9a"/><rect x="33" y="312" width="1" height="1" fill="#ffffff"/><rect x="27" y="302" width="1" height="1" fill="#b4b4b4"/><rect x="26" y="305" width="1" height="1" fill="#6a6a6a"/><rect x="12" y="307" width="1" height="1" fill="#fafafa"/><rect x="28" y="327" width="1" height="1" fill="#ffffff"/><rect x="24" y="300" width="1" height="1" fill="#b4b4b4"/><rect x="28" y="331" width="1" height="1" fill="#8a8a8a"/><rect x="26" y="323" width="1" height="1" fill="#fafafa"/><rect x="53" y="334" width="1" height="1" fill="#b4b4b4"/><rect x="48" y="325" width="1" height="1" fill="#9a9a9a"/><rect x="30" y="311" width="1" height="1" fill="#fafafa"/><rect x="45" y="339" width="1" height="1" fill="#8a8a8a"/><rect x="51" y="336" width="1" height="1" fill="#a0a0a0"/><rect x="37" y="320" width="1" height="1" fill="#b4b4b4"/><rect x="19" y="314" width="1" height="1" fill="#5a5a5a"/><rect x="29" y="300" width="1" height="1" fill="#7a7a7a"/><rect x="24" y="315" width="1" height="1" fill="#9a9a9a"/><rect x="45" y="309" width="1" height="1" fill="#ffffff"/><rect x="44" y="308" width="1" height="1" fill="#8a8a8a"/><rect x="14" y="302" width="1" height="1" fill="#6a6a6a"/><rect x="27" y="336" width="1" height="1" fill="#5a5a5a"/><rect x="15" y="325" width="1" height="1" fill="#9a9a9a"/><rect x="37" y="299" width="1" height="1" fill="#6a6a6a"/><rect x="42" y="340" width="1" height="1" fill="#7a7a7a"/><rect x="9" y="302" width="1" height="1" fill="#9a9a9a"/><rect x="51" y="312" width="1" height="1" fill="#fafafa"/><rect x="37" y="342" width="1" height="1" fill="#b4b4b4"/><rect x="35" y="328" width="1" height="1" fill="#9a9a9a"/><rect x="12" y="299" width="1" height="1" fill="#ffffff"/><rect x="38" y="332" width="1" height="1" fill="#6a6a6a"/><rect x="14" y="325" width="1" height="1" fill="#8a8a8a"/><rect x="40" y="318" width="1" height="1" fill="#9a9a9a"/><rect x="46" y="312" width="1" height="1" fill="#fafafa"/><rect x="23" y="323" width="1" height="1" fill="#7a7a7a"/><rect x="17" y="342" width="1" height="1" fill="#ffffff"/><rect x="22" y="307" width="1" height="1" fill="#a0a0a0"/><rect x="15" y="309" width="1" height="1" fill="#8a8a8a"/><rect x="16" y="333" width="1" height="1" fill="#8a8a8a"/><rect x="53" y="329" width="1" height="1" fill="#fafafa"/><rect x="24" y="316" width="1" height="1" fill="#b4b4b4"/><rect x="13" y="328" width="1" height="1" fill="#fafafa"/><rect x="12" y="323" width="1" height="1" fill="#9a9a9a"/><rect x="35" y="327" width="1" height="1" fill="#a0a0a0"/><rect x="41" y="334" width="1" height="1" fill="#7a7a7a"/><rect x="14" y="326" width="1" height="1" fill="#5a5a5a"/><rect x="49" y="316" width="1" height="1" fill="#7a7a7a"/><rect x="47" y="331" width="1" height="1" fill="#8a8a8a"/><rect x="49" y="328" width="1" height="1" fill="#ffffff"/><rect x="17" y="322" width="1" height="1" fill="#7a7a7a"/><rect x="19" y="340" width="1" height="1" fill="#8a8a8a"/><rect x="36" y="322" width="1" height="1" fill="#6a6a6a"/><rect x="18" y="332" width="1" height="1" fill="#b4b4b4"/><rect x="47" y="324" width="1" height="1" fill="#6a6a6a"/><rect x="40" y="299" width="1" height="1" fill="#8a8a8a"/><rect x="27" y="314" width="1" height="1" fill="#ffffff"/><rect x="11" y="339" width="1" height="1" fill="#fafafa"/><rect x="30" y="308" width="1" height="1" fill="#9a9a9a"/><rect x="29" y="324" width="1" height="1" fill="#b4b4b4"/><rect x="42" y="299" width="1" height="1" fill="#a0a0a0"/><rect x="36" y="298" width="1" height="1" fill="#b4b4b4"/><rect x="13" y="320" width="1" height="1" fill="#9a9a9a"/><rect x="28" y="309" width="1" height="1" fill="#b4b4b4"/><rect x="17" y="333" width="1" height="1" fill="#7a7a7a"/><rect x="17" y="326" width="1" height="1" fill="#fafafa"/><rect x="43" y="332" width="1" height="1" fill="#a0a0a0"/><rect x="33" y="326" width="1" height="1" fill="#fafafa"/><rect x="22" y="303" width="1" height="1" fill="#7a7a7a"/><rect x="20" y="331" width="1" height="1" fill="#b4b4b4"/><rect x="49" y="299" width="1" height="1" fill="#9a9a9a"/><rect x="20" y="311" width="1" height="1" fill="#5a5a5a"/><rect x="28" y="299" width="1" height="1" fill="#8a8a8a"/><rect x="29" y="310" width="1" height="1" fill="#9a9a9a"/><rect x="41" y="298" width="1" height="1" fill="#8a8a8a"/><rect x="19" y="305" width="1" height="1" fill="#ffffff"/><rect x="39" y="300" width="1" height="1" fill="#8a8a8a"/><rect x="29" y="320" width="1" height="1" fill="#9a9a9a"/><rect x="45" y="309" width="1" height="1" fill="#b4b4b4"/><rect x="25" y="319" width="1" height="1" fill="#5a5a5a"/><rect x="48" y="330" width="1" height="1" fill="#7a7a7a"/><rect x="47" y="328" width="1" height="1" fill="#a0a0a0"/><rect x="32" y="335" width="1" height="1" fill="#6a6a6a"/><rect x="27" y="322" width="1" height="1" fill="#b4b4b4"/><rect x="16" y="338" width="1" height="1" fill="#fafafa"/><rect x="53" y="322" width="1" height="1" fill="#ffffff"/><rect x="18" y="326" width="1" height="1" fill="#6a6a6a"/><rect x="44" y="312" width="1" height="1" fill="#8a8a8a"/><rect x="50" y="336" width="1" height="1" fill="#b4b4b4"/><rect x="23" y="322" width="1" height="1" fill="#fafafa"/><rect x="46" y="315" width="1" height="1" fill="#ffffff"/><rect x="17" y="328" width="1" height="1" fill="#ffffff"/><rect x="47" y="300" width="1" height="1" fill="#8a8a8a"/><rect x="40" y="318" width="1" height="1" fill="#5a5a5a"/><rect x="31" y="329" width="1" height="1" fill="#fafafa"/><rect x="24" y="309" width="1" height="1" fill="#fafafa"/><rect x="18" y="308" width="1" height="1" fill="#7a7a7a"/><rect x="49" y="338" width="1" height="1" fill="#ffffff"/><rect x="20" y="333" width="1" height="1" fill="#ffffff"/><rect x="51" y="321" width="1" height="1" fill="#ffffff"/><rect x="45" y="322" width="1" height="1" fill="#9a9a9a"/><rect x="16" y="340" width="1" height="1" fill="#ffffff"/><rect x="39" y="342" width="1" height="1" fill="#b4b4b4"/><rect x="31" y="307" width="1" height="1" fill="#8a8a8a"/><rect x="26" y="331" width="1" height="1" fill="#ffffff"/><rect x="40" y="326" width="1" height="1" fill="#5a5a5a"/><rect x="49" y="310" width="1" height="1" fill="#b4b4b4"/><rect x="14" y="333" width="1" height="1" fill="#6a6a6a"/><rect x="16" y="335" width="1" height="1" fill="#ffffff"/><rect x="48" y="332" width="1" height="1" fill="#fafafa"/><rect x="33" y="340" width="1" height="1" fill="#b4b4b4"/><rect x="20" y="300" width="1" height="1" fill="#5a5a5a"/><rect x="21" y="314" width="1" height="1" fill="#6a6a6a"/><rect x="19" y="304" width="1" height="1" fill="#8a8a8a"/><rect x="12" y="335" width="1" height="1" fill="#ffffff"/><rect x="44" y="311" width="1" height="1" fill="#b4b4b4"/><rect x="52" y="316" width="1" height="1" fill="#8a8a8a"/><rect x="9" y="310" width="1" height="1" fill="#ffffff"/><rect x="15" y="314" width="1" height="1" fill="#ffffff"/><rect x="12" y="326" width="1" height="1" fill="#a0a0a0"/><rect x="30" y="327" width="1" height="1" fill="#7a7a7a"/><rect x="43" y="308" width="1" height="1" fill="#a0a0a0"/><rect x="24" y="314" width="1" height="1" fill="#8a8a8a"/><rect x="16" y="309" width="1" height="1" fill="#8a8a8a"/><rect x="21" y="337" width="1" height="1" fill="#8a8a8a"/><rect x="29" y="336" width="1" height="1" fill="#ffffff"/><rect x="44" y="334" width="1" height="1" fill="#5a5a5a"/><rect x="40" y="333" width="1" height="1" fill="#fafafa"/><rect x="42" y="309" width="1" height="1" fill="#8a8a8a"/><rect x="32" y="321" width="1" height="1" fill="#5a5a5a"/><rect x="14" y="317" width="1" height="1" fill="#ffffff"/><rect x="26" y="334" width="1" height="1" fill="#a0a0a0"/><rect x="17" y="311" width="1" height="1" fill="#a0a0a0"/><rect x="12" y="315" width="1" height="1" fill="#6a6a6a"/><rect x="36" y="337" width="1" height="1" fill="#7a7a7a"/><rect x="20" y="324" width="1" height="1" fill="#6a6a6a"/><rect x="37" y="341" width="1" height="1" fill="#ffffff"/><rect x="30" y="335" width="1" height="1" fill="#a0a0a0"/><rect x="25" y="322" width="1" height="1" fill="#6a6a6a"/><rect x="38" y="307" width="1" height="1" fill="#8a8a8a"/><rect x="52" y="315" width="1" height="1" fill="#ffffff"/><rect x="17" y="317" width="1" height="1" fill="#6a6a6a"/><rect x="30" y="338" width="1" height="1" fill="#8a8a8a"/><rect x="30" y="313" width="1" height="1" fill="#fafafa"/><rect x="13" y="317" width="1" height="1" fill="#8a8a8a"/><rect x="9" y="305" width="1" height="1" fill="#a0a0a0"/><rect x="52" y="336" width="1" height="1" fill="#8a8a8a"/><rect x="17" y="336" width="1" height="1" fill="#9a9a9a"/><rect x="18" y="330" width="1" height="1" fill="#b4b4b4"/><rect x="47" y="326" width="1" height="1" fill="#a0a0a0"/><rect x="44" y="314" width="1" height="1" fill="#5a5a5a"/><rect x="37" y="311" width="1" height="1" fill="#9a9a9a"/><rect x="15" y="299" width="1" height="1" fill="#8a8a8a"/><rect x="10" y="317" width="1" height="1" fill="#6a6a6a"/><rect x="31" y="331" width="1" height="1" fill="#fafafa"/><rect x="22" y="299" width="1" height="1" fill="#fafafa"/><rect x="42" y="301" width="1" height="1" fill="#a0a0a0"/><rect x="15" y="340" width="1" height="1" fill="#fafafa"/><rect x="28" y="341" width="1" height="1" fill="#a0a0a0"/><rect x="28" y="328" width="1" height="1" fill="#9a9a9a"/><rect x="33" y="330" width="1" height="1" fill="#9a9a9a"/><rect x="25" y="332" width="1" height="1" fill="#b4b4b4"/><rect x="41" y="321" width="1" height="1" fill="#7a7a7a"/><rect x="11" y="336" width="1" height="1" fill="#b4b4b4"/><rect x="10" y="308" width="1" height="1" fill="#7a7a7a"/><rect x="48" y="317" width="1" height="1" fill="#6a6a6a"/><rect x="28" y="315" width="1" height="1" fill="#7a7a7a"/><rect x="19" y="309" width="1" height="1" fill="#fafafa"/><rect x="42" y="330" width="1" height="1" fill="#a0a0a0"/><rect x="45" y="309" width="1" height="1" fill="#b4b4b4"/><rect x="15" y="318" width="1" height="1" fill="#7a7a7a"/><rect x="37" y="316" width="1" height="1" fill="#7a7a7a"/><rect x="9" y="336" width="1" height="1" fill="#6a6a6a"/><rect x="48" y="304" width="1" height="1" fill="#a0a0a0"/><rect x="43" y="300" width="1" height="1" fill="#b4b4b4"/><rect x="26" y="333" width="1" height="1" fill="#fafafa"/><rect x="31" y="316" width="1" height="1" fill="#b4b4b4"/><rect x="22" y="322" width="1" height="1" fill="#b4b4b4"/><rect x="9" y="317" width="1" height="1" fill="#7a7a7a"/><rect x="48" y="325" width="1" height="1" fill="#5a5a5a"/><rect x="14" y="304" width="1" height="1" fill="#ffffff"/><rect x="12" y="301" width="1" height="1" fill="#a0a0a0"/><rect x="51" y="335" width="1" height="1" fill="#7a7a7a"/><rect x="53" y="330" width="1" height="1" fill="#7a7a7a"/><rect x="49" y="331" width="1" height="1" fill="#ffffff"/><rect x="51" y="299" width="1" height="1" fill="#b4b4b4"/><rect x="32" y="300" width="1" height="1" fill="#9a9a9a"/><rect x="11" y="318" width="1" height="1" fill="#b4b4b4"/><rect x="29" y="324" width="1" height="1" fill="#ffffff"/><rect x="25" y="321" width="1" height="1" fill="#a0a0a0"/><rect x="45" y="304" width="1" height="1" fill="#6a6a6a"/><rect x="45" y="301" width="1" height="1" fill="#6a6a6a"/><rect x="37" y="342" width="1" height="1" fill="#5a5a5a"/><rect x="36" y="305" width="1" height="1" fill="#ffffff"/><rect x="18" y="338" width="1" height="1" fill="#6a6a6a"/><rect x="16" y="313" width="1" height="1" fill="#5a5a5a"/><rect x="52" y="331" width="1" height="1" fill="#9a9a9a"/><rect x="16" y="340" width="1" height="1" fill="#7a7a7a"/><rect x="30" y="299" width="1" height="1" fill="#a0a0a0"/><rect x="28" y="315" width="1" height="1" fill="#6a6a6a"/><rect x="37" y="309" width="1" height="1" fill="#a0a0a0"/><rect x="34" y="334" width="1" height="1" fill="#ffffff"/><rect x="17" y="330" width="1" height="1" fill="#b4b4b4"/><rect x="47" y="315" width="1" height="1" fill="#ffffff"/><rect x="13" y="314" width="1" height="1" fill="#5a5a5a"/><rect x="44" y="334" width="1" height="1" fill="#9a9a9a"/><rect x="44" y="315" width="1" height="1" fill="#a0a0a0"/><rect x="38" y="307" width="1" height="1" fill="#a0a0a0"/><rect x="32" y="326" width="1" height="1" fill="#8a8a8a"/><rect x="51" y="317" width="1" height="1" fill="#a0a0a0"/><rect x="29" y="326" width="1" height="1" fill="#8a8a8a"/><rect x="23" y="303" width="1" height="1" fill="#a0a0a0"/><rect x="50" y="321" width="1" height="1" fill="#9a9a9a"/><rect x="21" y="300" width="1" height="1" fill="#9a9a9a"/><rect x="49" y="300" width="1" height="1" fill="#9a9a9a"/><rect x="18" y="332" width="1" height="1" fill="#6a6a6a"/><rect x="31" y="298" width="1" height="1" fill="#fafafa"/><rect x="18" y="341" width="1" height="1" fill="#fafafa"/><rect x="22" y="303" width="1" height="1" fill="#7a7a7a"/><rect x="13" y="307" width="1" height="1" fill="#5a5a5a"/><rect x="53" y="333" width="1" height="1" fill="#a0a0a0"/><rect x="29" y="308" width="1" height="1" fill="#7a7a7a"/><rect x="43" y="300" width="1" height="1" fill="#b4b4b4"/><rect x="23" y="329" width="1" height="1" fill="#a0a0a0"/><rect x="16" y="338" width="1" height="1" fill="#6a6a6a"/><rect x="16" y="299" width="1" height="1" fill="#ffffff"/><rect x="43" y="322" width="1" height="1" fill="#7a7a7a"/><rect x="24" y="317" width="1" height="1" fill="#6a6a6a"/><rect x="40" y="308" width="1" height="1" fill="#6a6a6a"/><rect x="28" y="300" width="1" height="1" fill="#9a9a9a"/><rect x="14" y="328" width="1" height="1" fill="#9a9a9a"/><rect x="33" y="332" width="1" height="1" fill="#b4b4b4"/><rect x="9" y="341" width="1" height="1" fill="#8a8a8a"/><rect x="16" y="298" width="1" height="1" fill="#a0a0a0"/><rect x="9" y="306" width="1" height="1" fill="#5a5a5a"/><rect x="24" y="307" width="1" height="1" fill="#7a7a7a"/><rect x="41" y="301" width="1" height="1" fill="#8a8a8a"/><rect x="40" y="314" width="1" height="1" fill="#6a6a6a"/><rect x="42" y="340" width="1" height="1" fill="#9a9a9a"/><rect x="41" y="309" width="1" height="1" fill="#b4b4b4"/><rect x="38" y="337" width="1" height="1" fill="#8a8a8a"/><rect x="12" y="320" width="1" height="1" fill="#9a9a9a"/><rect x="35" y="317" width="1" height="1" fill="#5a5a5a"/><rect x="32" y="327" width="1" height="1" fill="#6a6a6a"/><rect x="38" y="334" width="1" height="1" fill="#ffffff"/><rect x="37" y="329" width="1" height="1" fill="#9a9a9a"/><rect x="37" y="324" width="1" height="1" fill="#9a9a9a"/><rect x="30" y="309" width="1" height="1" fill="#6a6a6a"/><rect x="24" y="330" width="1" height="1" fill="#5a5a5a"/><rect x="17" y="338" width="1" height="1" fill="#9a9a9a"/><rect x="13" y="319" width="1" height="1" fill="#7a7a7a"/><rect x="14" y="323" width="1" height="1" fill="#a0a0a0"/><rect x="52" y="334" width="1" height="1" fill="#fafafa"/>
<rect x="59.5" y="296.5" width="48" height="48" fill="#fff" stroke="#a09e90"/>
<rect x="61" y="298" width="45" height="45" fill="#7f9a8c"/><polygon points="106,298 106,343 61,343" fill="#9fb6aa"/>
<g stroke-width="1.500" opacity=".55"><line x1="62" y1="298" x2="62" y2="343" stroke="#c8dcd0"/><line x1="66" y1="298" x2="66" y2="343" stroke="#5a7468"/><line x1="70" y1="298" x2="70" y2="343" stroke="#c8dcd0"/><line x1="74" y1="298" x2="74" y2="343" stroke="#5a7468"/><line x1="78" y1="298" x2="78" y2="343" stroke="#c8dcd0"/><line x1="82" y1="298" x2="82" y2="343" stroke="#5a7468"/><line x1="86" y1="298" x2="86" y2="343" stroke="#c8dcd0"/><line x1="90" y1="298" x2="90" y2="343" stroke="#5a7468"/><line x1="94" y1="298" x2="94" y2="343" stroke="#c8dcd0"/><line x1="98" y1="298" x2="98" y2="343" stroke="#5a7468"/><line x1="102" y1="298" x2="102" y2="343" stroke="#c8dcd0"/><line x1="106" y1="298" x2="106" y2="343" stroke="#5a7468"/></g>
<rect x="111.5" y="296.5" width="48" height="48" fill="#fff" stroke="#a09e90"/>
<rect x="113" y="298" width="45" height="45" fill="#1cb8ec"/><polygon points="158,298 158,343 113,343" fill="#8adcf8"/>
<rect x="163.5" y="296.5" width="48" height="48" fill="#fff" stroke="#a09e90"/>
<rect x="165" y="298" width="45" height="45" fill="#4a62b0"/><polygon points="210,298 210,343 165,343" fill="#aab4d8"/>
<g clip-path="url(#c2)" opacity=".8" filter="url(#bl)"><ellipse cx="194" cy="307" rx="12" ry="6" fill="#c8d0ec"/><ellipse cx="176" cy="319" rx="10" ry="5" fill="#dfe4f4"/><ellipse cx="194" cy="335" rx="14" ry="6" fill="#e8ecf8"/><ellipse cx="176" cy="333" rx="9" ry="6" fill="#2a3e90"/></g><clipPath id="c2"><rect x="165" y="298" width="45" height="45"/></clipPath>
<rect x="7.5" y="348.5" width="48" height="48" fill="#fff" stroke="#a09e90"/>
<rect x="9" y="350" width="45" height="45" fill="#3c5e10"/><polygon points="54,350 54,395 9,395" fill="#9aae80"/>
<rect x="59.5" y="348.5" width="48" height="48" fill="#fff" stroke="#a09e90"/>
<rect x="61" y="350" width="45" height="45" fill="#c4c4c4"/>
<rect x="62" y="351" width="13" height="13" fill="#7c7c7c"/><path d="M64,353 l9,8 M73,354 l-8,7" stroke="#4a4a4a" stroke-width="1.600" opacity=".8"/><rect x="62" y="351" width="13" height="13" fill="none" stroke="#9a9a9a" stroke-width=".8"/><rect x="77" y="351" width="13" height="13" fill="#7c7c7c"/><path d="M79,353 l9,8 M88,354 l-8,7" stroke="#4a4a4a" stroke-width="1.600" opacity=".8"/><rect x="77" y="351" width="13" height="13" fill="none" stroke="#9a9a9a" stroke-width=".8"/><rect x="92" y="351" width="13" height="13" fill="#7c7c7c"/><path d="M94,353 l9,8 M103,354 l-8,7" stroke="#4a4a4a" stroke-width="1.600" opacity=".8"/><rect x="92" y="351" width="13" height="13" fill="none" stroke="#9a9a9a" stroke-width=".8"/><rect x="62" y="366" width="13" height="13" fill="#7c7c7c"/><path d="M64,368 l9,8 M73,369 l-8,7" stroke="#4a4a4a" stroke-width="1.600" opacity=".8"/><rect x="62" y="366" width="13" height="13" fill="none" stroke="#9a9a9a" stroke-width=".8"/><rect x="77" y="366" width="13" height="13" fill="#7c7c7c"/><path d="M79,368 l9,8 M88,369 l-8,7" stroke="#4a4a4a" stroke-width="1.600" opacity=".8"/><rect x="77" y="366" width="13" height="13" fill="none" stroke="#9a9a9a" stroke-width=".8"/><rect x="92" y="366" width="13" height="13" fill="#7c7c7c"/><path d="M94,368 l9,8 M103,369 l-8,7" stroke="#4a4a4a" stroke-width="1.600" opacity=".8"/><rect x="92" y="366" width="13" height="13" fill="none" stroke="#9a9a9a" stroke-width=".8"/><rect x="62" y="381" width="13" height="13" fill="#7c7c7c"/><path d="M64,383 l9,8 M73,384 l-8,7" stroke="#4a4a4a" stroke-width="1.600" opacity=".8"/><rect x="62" y="381" width="13" height="13" fill="none" stroke="#9a9a9a" stroke-width=".8"/><rect x="77" y="381" width="13" height="13" fill="#7c7c7c"/><path d="M79,383 l9,8 M88,384 l-8,7" stroke="#4a4a4a" stroke-width="1.600" opacity=".8"/><rect x="77" y="381" width="13" height="13" fill="none" stroke="#9a9a9a" stroke-width=".8"/><rect x="92" y="381" width="13" height="13" fill="#7c7c7c"/><path d="M94,383 l9,8 M103,384 l-8,7" stroke="#4a4a4a" stroke-width="1.600" opacity=".8"/><rect x="92" y="381" width="13" height="13" fill="none" stroke="#9a9a9a" stroke-width=".8"/>
    </svg>
  </div>
</div>
<div id="ins" class="abs"><span class="abs" style="left:3px;top:4px">Instructor</span><i class="pclose abs" style="left:303px;top:5px"></i></div>
<!--/PANELS-->
<i class="abs" style="left:0;top:78px;width:1024px;height:2px;border-top:1px solid #aca899;background:#716f64"></i><i class="abs" style="left:0;top:79px;width:2px;height:627px;border-left:1px solid #aca899;background:#716f64"></i><i class="abs" style="left:1022px;top:79px;width:2px;height:629px;background:#fff;border-left:1px solid #f1efe2"></i>
<div id="status" class="abs">
  <svg class="abs" style="left:0;top:3px" width="130" height="24" viewBox="0 710 130 24">
    <defs><radialGradient id="qg" cx=".35" cy=".3" r=".8"><stop offset="0" stop-color="#fff"/><stop offset=".6" stop-color="#d4e6f8"/><stop offset="1" stop-color="#7aa8d8"/></radialGradient></defs>
    <g fill="#f6ece0" stroke="#80561a" stroke-width="2.300"><circle cx="13" cy="722" r="8.800"/><circle cx="41" cy="722" r="8.800"/><circle cx="69" cy="722" r="8.800"/></g>
    <circle cx="13" cy="719.500" r="3.300" fill="#f8d8d0" stroke="#d8a8a0" stroke-width=".8"/><path d="M13,722.500 V728" stroke="#d8a8a0" stroke-width="1.600"/>
    <circle cx="41" cy="716.800" r="1.500" fill="#111"/><path d="M39,719 H43 V724 H42.300 V728.500 H39.700 V724 H39 Z" fill="#111"/>
    <path d="M73.500,718.500 Q70,715 66,717.500 Q62.500,721 65.500,725.500 Q69,728.500 73,725.500 V722 H69.500" fill="none" stroke="#b08858" stroke-width="1.300"/>
    <path d="M88.500,712 V732" stroke="#a7a594"/><path d="M89.500,712 V732" stroke="#fff"/>
    <circle cx="107" cy="722" r="9.300" fill="url(#qg)" stroke="#16324e" stroke-width="1.700"/>
    <text x="107" y="727.500" text-anchor="middle" font-family="Liberation Sans, sans-serif" font-weight="bold" font-size="16" fill="#000">?</text>
  </svg>
  <span class="abs" style="left:124px;top:7px;font-size:12px;letter-spacing:.36px;white-space:nowrap">Arrastra para orbitar. Mayúsculas = Desplazar</span>
  <i class="abs" style="left:679px;top:3px;width:2px;height:22px;border-left:1px solid #a7a594;border-right:1px solid #fff"></i>
  <span class="abs" style="left:767px;top:7px;font-size:12px;letter-spacing:.3px">Medidas</span>
  <div class="abs" style="left:818px;top:2px;width:204px;height:23px;border:1px solid;border-color:#a7a594 #fff #fff #a7a594"></div>
</div>
<div id="frameb" class="abs"></div>
<div id="task" class="abs">
  <div id="start" class="abs">
    <svg class="abs" style="left:9px;top:5px" width="22" height="20" viewBox="0 0 22 20">
      <path d="M3,3.500 Q6,1 10,3 L8.500,9 Q5,7 1.500,9.500 Z" fill="#f05a28"/>
      <path d="M11.500,3.500 Q15,5.500 19,3 L17.500,9 Q14,11.500 10,9.500 Z" fill="#7ac040"/>
      <path d="M1,11 Q4.500,8.500 8,10.500 L6.500,16.500 Q3,14.500 -.5,17 Z" fill="#4a8af0"/>
      <path d="M9.500,11 Q13,13 17,10.500 L15.500,16.500 Q12,19 8,17 Z" fill="#f8c020"/>
    </svg>
    <span class="abs" style="left:34px;top:5px">Inicio</span></div>
  <i class="abs" style="left:110px;top:6px;width:2px;height:20px;background:repeating-linear-gradient(#1440c0 0,#1440c0 2px,transparent 2px,transparent 6px)"></i><i class="abs" style="left:113px;top:9px;width:2px;height:17px;background:repeating-linear-gradient(#1440c0 0,#1440c0 2px,transparent 2px,transparent 6px)"></i>
  <div class="tbtn abs" style="left:121px;width:159px"><svg class="abs" style="left:9px;top:4px" width="16" height="16" viewBox="0 0 16 16"><circle cx="8" cy="8" r="7.500" fill="#e8402a"/><path d="M8,8 L1.500,4.200 A7.500,7.500 0 0 0 5.500,15.100 Z" fill="#3aa850"/><path d="M8,8 L5.500,15.100 A7.500,7.500 0 0 0 15.300,6.500 Z" fill="#f8c818"/><circle cx="8" cy="8" r="3.400" fill="#fff"/><circle cx="8" cy="8" r="2.600" fill="#4a8af0"/></svg><span style="left:28px">Inicio - Google Chrome</span></div>
  <div class="tbtn abs" style="left:282px;width:158px"><svg class="abs" style="left:8px;top:4px" width="17" height="16" viewBox="0 0 17 16"><circle cx="11" cy="4" r="2.800" fill="#e8ecf4"/><path d="M6.500,13 Q7,7 11,7.500 Q15.500,7.500 15.500,13 Z" fill="#dfe6f0"/><circle cx="5" cy="6" r="2.500" fill="#fff"/><path d="M1,15 Q1.500,9.500 5,9.500 Q9,9.500 9,15 Z" fill="#f4f6fa"/><path d="M11,1 L13,3 L16,0" stroke="#8acc6a" stroke-width="1.200" fill="none"/></svg><span style="left:28px">asier &lt;asierlorenzo@...</span></div>
  <div class="tbtn abs" style="left:442px;width:158px"><svg class="abs" style="left:8px;top:4px" width="17" height="16" viewBox="0 0 17 16"><circle cx="11" cy="4" r="2.800" fill="#e8ecf4"/><path d="M6.500,13 Q7,7 11,7.500 Q15.500,7.500 15.500,13 Z" fill="#dfe6f0"/><circle cx="5" cy="6" r="2.500" fill="#fff"/><path d="M1,15 Q1.500,9.500 5,9.500 Q9,9.500 9,15 Z" fill="#f4f6fa"/><path d="M11,1 L13,3 L16,0" stroke="#8acc6a" stroke-width="1.200" fill="none"/></svg><span style="left:27px">Sergio Garrido &lt;howli...</span></div>
  <div class="tbtn act abs" style="left:602px;width:158px"><svg class="abs" style="left:8px;top:4px" width="16" height="16" viewBox="0 0 16 16">
    <path d="M1.500,7 L6,2 L11,5.500 L6.500,12.500 L2,10.500 Z" fill="#f0e4d8" stroke="#8a5a3a" stroke-width=".6"/><path d="M6,2 L11,5.500 L9.500,7.500 L4.500,4 Z" fill="#c8461e"/><path d="M3,13.500 L13.500,2.500 L14.800,3.800 L5,14.500 L2.500,15 Z" fill="#e03818" stroke="#7a1a08" stroke-width=".5"/></svg><span style="left:28px">Sin título - SketchUp</span></div>
  <div id="tray" class="abs">
    <svg class="abs" style="left:-12px;top:2px" width="80" height="26" viewBox="902 740 80 26">
      <circle cx="913" cy="753" r="9" fill="#3a8af4" stroke="#9acaf8" stroke-width="1"/><path d="M915.500,748.500 L911,753 L915.500,757.500" stroke="#fff" stroke-width="2.400" fill="none"/>
      <rect x="924" y="745" width="16" height="13" fill="#3a3428"/><rect x="925" y="746" width="5" height="5" fill="#8a9a3a"/><rect x="931" y="747" width="4" height="4" fill="#d8c848"/><rect x="935" y="746" width="4" height="11" fill="#8a4a2a"/><rect x="926" y="753" width="8" height="4" fill="#c8a838"/>
      <circle cx="948" cy="748" r="3.500" fill="#f0a818"/><circle cx="946" cy="755" r="3.500" fill="#f0a818"/><circle cx="954" cy="752" r="3.500" fill="#f0a818"/><circle cx="953" cy="756" r="3.300" fill="#3aa83a"/><path d="M951.300,756 L952.700,757.500 L955,754.500" stroke="#fff" stroke-width="1.200" fill="none"/>
      <circle cx="967" cy="751" r="5.500" fill="#8a8e96" stroke="#c8ccd4" stroke-width="1.400"/><circle cx="966" cy="750" r="2.400" fill="#4a2a2a"/><path d="M970,758 L975,753 M972,760 L977,755" stroke="#9acaf8" stroke-width=".9"/>
    </svg>
    <span class="abs" style="left:70px;top:8px">18:12</span></div>
</div>
</body>
</html>
